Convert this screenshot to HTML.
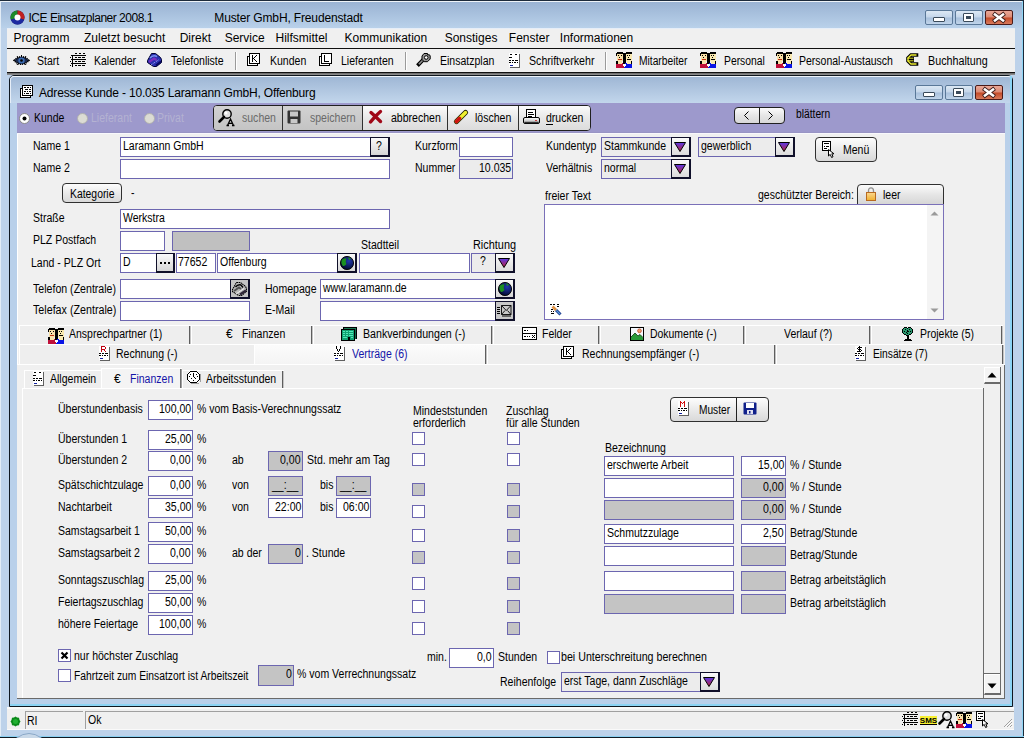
<!DOCTYPE html>
<html><head><meta charset="utf-8"><style>
html,body{margin:0;padding:0;}
body{width:1024px;height:738px;overflow:hidden;position:relative;background:#bdd2ea;font-family:"Liberation Sans",sans-serif;}
.a{position:absolute;box-sizing:border-box;}
.t{position:absolute;white-space:nowrap;color:#000;font-family:"Liberation Sans",sans-serif;font-size:12px;line-height:12px;transform-origin:0 0;}
svg.a{overflow:visible;}
</style></head><body>
<div class="a" style="left:0px;top:0px;width:1024px;height:738px;background:#bdd2ea;"></div>
<div class="a" style="left:0px;top:0px;width:1024px;height:1px;background:#1c2a3a;"></div>
<div class="a" style="left:0px;top:1px;width:1px;height:737px;background:#e2ecf6;"></div>
<div class="a" style="left:1023px;top:0px;width:1px;height:738px;background:#1c2a3a;"></div>
<div class="a" style="left:1022px;top:1px;width:1px;height:736px;background:#8fd6f5;"></div>
<div class="a" style="left:0px;top:737px;width:1024px;height:1px;background:#0f1a24;"></div>
<div class="a" style="left:0px;top:736px;width:1024px;height:1px;background:#89cff0;"></div>
<div class="a" style="left:1px;top:1px;width:1021px;height:27px;background:linear-gradient(#9ab3d3,#b9d1ea);border-top:1px solid #eef3f8;"></div>
<div class="a" style="left:7px;top:28px;width:1008px;height:1px;background:#e6eef8;"></div>
<svg class="a" style="left:10px;top:10px;" width="15" height="15" viewBox="0 0 15 15"><circle cx="7.5" cy="7.5" r="7" fill="#1a1a50"/><path d="M7.5 0.5 A7 7 0 0 0 0.9 9.8 L7.5 7.5Z" fill="#1d8a2a"/><path d="M7.5 0.5 A7 7 0 0 1 14.1 9.8 L7.5 7.5Z" fill="#c02020"/><path d="M0.9 9.8 A7 7 0 0 0 14.1 9.8 L7.5 7.5Z" fill="#1d2aa0"/><circle cx="7.5" cy="7.5" r="3" fill="#fff"/></svg>
<div class="t" style="top:12px;left:28.50px;letter-spacing:-0.487px;">ICE Einsatzplaner 2008.1</div>
<div class="t" style="top:12px;left:214.30px;letter-spacing:-0.142px;">Muster GmbH, Freudenstadt</div>
<div class="a" style="left:925px;top:10px;width:28px;height:15px;background:linear-gradient(#dce8f4,#c4d6ea 48%,#a8c0dc 52%,#c0d4ea);border:1px solid #5a7898;border-radius:2px;"></div>
<div class="a" style="left:955px;top:10px;width:28px;height:15px;background:linear-gradient(#dce8f4,#c4d6ea 48%,#a8c0dc 52%,#c0d4ea);border:1px solid #5a7898;border-radius:2px;"></div>
<div class="a" style="left:985px;top:10px;width:28px;height:15px;background:linear-gradient(#eaa898,#dc8a74 48%,#c44a28 52%,#d87a5c);border:1px solid #4a1a18;border-radius:2px;"></div>
<div class="a" style="left:933px;top:17px;width:12px;height:5px;background:#fff;border:1px solid #3a4a5a;border-radius:1px;"></div>
<div class="a" style="left:963px;top:13px;width:11px;height:9px;background:#fff;border:1px solid #3a4a5a;border-radius:1px;"></div>
<div class="a" style="left:966px;top:16px;width:5px;height:3px;background:#3a4a5a;"></div>
<svg class="a" style="left:993px;top:13px;" width="12" height="9" viewBox="0 0 12 9"><path d="M2 1.5 L10 7.5 M10 1.5 L2 7.5" stroke="#3a1a18" stroke-width="4.2" stroke-linecap="square"/><path d="M2 1.5 L10 7.5 M10 1.5 L2 7.5" stroke="#fff" stroke-width="2.6" stroke-linecap="square"/></svg>
<div class="a" style="left:7px;top:29px;width:1008px;height:19px;background:#f0f0f0;"></div>
<div class="a" style="left:7px;top:48px;width:1008px;height:1px;background:#101010;"></div>
<div class="t" style="top:32px;left:13.50px;">Programm</div>
<div class="t" style="top:32px;left:84.00px;">Zuletzt besucht</div>
<div class="t" style="top:32px;left:179.70px;">Direkt</div>
<div class="t" style="top:32px;left:224.70px;">Service</div>
<div class="t" style="top:32px;left:275.50px;">Hilfsmittel</div>
<div class="t" style="top:32px;left:344.50px;">Kommunikation</div>
<div class="t" style="top:32px;left:444.70px;">Sonstiges</div>
<div class="t" style="top:32px;left:508.80px;">Fenster</div>
<div class="t" style="top:32px;left:559.80px;">Informationen</div>
<div class="a" style="left:7px;top:49px;width:1008px;height:23px;background:#f0f0f0;"></div>
<div class="a" style="left:7px;top:72px;width:1008px;height:1px;background:#101010;"></div>
<div class="a" style="left:7px;top:73px;width:1008px;height:1px;background:#707070;"></div>
<div class="a" style="left:7px;top:74px;width:1008px;height:1px;background:#8a8a8a;"></div>
<div class="a" style="left:235px;top:52px;width:1px;height:18px;background:#9a9a9a;"></div>
<div class="a" style="left:236px;top:52px;width:1px;height:18px;background:#ffffff;"></div>
<div class="a" style="left:405px;top:52px;width:1px;height:18px;background:#9a9a9a;"></div>
<div class="a" style="left:406px;top:52px;width:1px;height:18px;background:#ffffff;"></div>
<div class="a" style="left:605px;top:52px;width:1px;height:18px;background:#9a9a9a;"></div>
<div class="a" style="left:606px;top:52px;width:1px;height:18px;background:#ffffff;"></div>
<div class="t" style="top:55px;left:36.50px;transform:scaleX(0.8770);">Start</div>
<div class="t" style="top:55px;left:93.50px;transform:scaleX(0.8770);">Kalender</div>
<div class="t" style="top:55px;left:171.00px;transform:scaleX(0.8770);">Telefonliste</div>
<div class="t" style="top:55px;left:269.50px;transform:scaleX(0.8770);">Kunden</div>
<div class="t" style="top:55px;left:341.40px;transform:scaleX(0.8770);">Lieferanten</div>
<div class="t" style="top:55px;left:439.50px;transform:scaleX(0.8770);">Einsatzplan</div>
<div class="t" style="top:55px;left:528.60px;transform:scaleX(0.8838);">Schriftverkehr</div>
<div class="t" style="top:55px;left:639.30px;transform:scaleX(0.8544);">Mitarbeiter</div>
<div class="t" style="top:55px;left:723.60px;transform:scaleX(0.8617);">Personal</div>
<div class="t" style="top:55px;left:799.40px;transform:scaleX(0.8748);">Personal-Austausch</div>
<div class="t" style="top:55px;left:928.40px;transform:scaleX(0.8955);">Buchhaltung</div>
<div class="a" style="left:9px;top:75px;width:1004px;height:632px;background:#b9d0ea;border:1px solid #101820;border-radius:5px 5px 0 0;"></div>
<div class="a" style="left:10px;top:76px;width:1002px;height:27px;background:linear-gradient(#9fb7d5,#c2d6ec);border-radius:4px 4px 0 0;border-top:1px solid #eef4fa;border-left:1px solid #e6eef8;"></div>
<div class="a" style="left:10px;top:704px;width:1002px;height:2px;background:#8cd4f4;"></div>
<div class="a" style="left:1010px;top:76px;width:2px;height:630px;background:#8cd4f4;"></div>
<svg class="a" style="left:20px;top:85px;" width="14" height="14" viewBox="0 0 14 14"><g shape-rendering="crispEdges"><rect x="0" y="3" width="11" height="10" fill="#000"/><rect x="1" y="4" width="9" height="8" fill="#fff"/><rect x="2" y="0" width="11" height="11" fill="#000"/><rect x="3" y="1" width="9" height="9" fill="#fff"/><rect x="4" y="2" width="2" height="1" fill="#000"/><rect x="7" y="2" width="2" height="1" fill="#000"/><rect x="10" y="2" width="1" height="1" fill="#000"/><rect x="5" y="4" width="3" height="1" fill="#000"/><rect x="9" y="4" width="2" height="1" fill="#000"/><rect x="4" y="6" width="2" height="1" fill="#000"/><rect x="7" y="6" width="1" height="1" fill="#000"/><rect x="9" y="6" width="2" height="1" fill="#000"/><rect x="4" y="8" width="1" height="1" fill="#000"/><rect x="6" y="8" width="3" height="1" fill="#000"/><rect x="10" y="8" width="1" height="1" fill="#000"/></g></svg>
<div class="t" style="top:87px;left:39.00px;letter-spacing:-0.174px;">Adresse Kunde - 10.035 Laramann GmbH, Offenburg</div>
<div class="a" style="left:915px;top:85px;width:28px;height:15px;background:linear-gradient(#dce8f4,#c4d6ea 48%,#a8c0dc 52%,#c0d4ea);border:1px solid #5a7898;border-radius:2px;"></div>
<div class="a" style="left:945px;top:85px;width:28px;height:15px;background:linear-gradient(#dce8f4,#c4d6ea 48%,#a8c0dc 52%,#c0d4ea);border:1px solid #5a7898;border-radius:2px;"></div>
<div class="a" style="left:975px;top:85px;width:28px;height:15px;background:linear-gradient(#eaa898,#dc8a74 48%,#c44a28 52%,#d87a5c);border:1px solid #4a1a18;border-radius:2px;"></div>
<div class="a" style="left:923px;top:92px;width:12px;height:5px;background:#fff;border:1px solid #3a4a5a;border-radius:1px;"></div>
<div class="a" style="left:953px;top:88px;width:11px;height:9px;background:#fff;border:1px solid #3a4a5a;border-radius:1px;"></div>
<div class="a" style="left:956px;top:91px;width:5px;height:3px;background:#3a4a5a;"></div>
<svg class="a" style="left:983px;top:88px;" width="12" height="9" viewBox="0 0 12 9"><path d="M2 1.5 L10 7.5 M10 1.5 L2 7.5" stroke="#3a1a18" stroke-width="4.2" stroke-linecap="square"/><path d="M2 1.5 L10 7.5 M10 1.5 L2 7.5" stroke="#fff" stroke-width="2.6" stroke-linecap="square"/></svg>
<div class="a" style="left:17px;top:103px;width:988px;height:30px;background:#9d99cc;"></div>
<div class="a" style="left:17px;top:132px;width:988px;height:1px;background:#9894c4;"></div>
<svg class="a" style="left:19px;top:113px;" width="11" height="11" viewBox="0 0 11 11"><circle cx="5.5" cy="5.5" r="5" fill="#ffffff" stroke="#8a8a8a" stroke-width="1"/><circle cx="5.5" cy="5.5" r="2" fill="#000"/></svg>
<svg class="a" style="left:77px;top:113px;" width="11" height="11" viewBox="0 0 11 11"><circle cx="5.5" cy="5.5" r="5" fill="#dcdcd4" stroke="#b0b0b0" stroke-width="1"/></svg>
<svg class="a" style="left:144px;top:113px;" width="11" height="11" viewBox="0 0 11 11"><circle cx="5.5" cy="5.5" r="5" fill="#dcdcd4" stroke="#b0b0b0" stroke-width="1"/></svg>
<div class="t" style="top:112px;left:33.60px;transform:scaleX(0.8770);">Kunde</div>
<div class="t" style="top:112px;left:90.60px;transform:scaleX(0.8770);color:#b4b2d2;">Lieferant</div>
<div class="t" style="top:112px;left:157.00px;transform:scaleX(0.8770);color:#b4b2d2;">Privat</div>
<div class="a" style="left:213px;top:105px;width:378px;height:26px;background:#ececec;border:1px solid #202020;border-radius:4px;"></div>
<div class="a" style="left:214px;top:106px;width:148px;height:24px;background:linear-gradient(#d2d2d2,#c4c4c4);border-radius:3px 0 0 3px;"></div>
<div class="a" style="left:363px;top:106px;width:227px;height:24px;background:linear-gradient(#fbfbfb,#e8e8e8 50%,#dcdcdc);border-radius:0 3px 3px 0;"></div>
<div class="a" style="left:282px;top:106px;width:1px;height:24px;background:#303030;"></div>
<div class="a" style="left:362px;top:106px;width:1px;height:24px;background:#303030;"></div>
<div class="a" style="left:447px;top:106px;width:1px;height:24px;background:#303030;"></div>
<div class="a" style="left:518px;top:106px;width:1px;height:24px;background:#303030;"></div>
<div class="t" style="top:112px;left:241.80px;transform:scaleX(0.8770);color:#6a6a6a;">suchen</div>
<div class="t" style="top:112px;left:310.00px;transform:scaleX(0.8770);color:#6a6a6a;">speichern</div>
<div class="t" style="top:112px;left:390.50px;transform:scaleX(0.8770);">abbrechen</div>
<div class="t" style="top:112px;left:475.30px;transform:scaleX(0.8770);">löschen</div>
<div class="t" style="top:112px;left:546.30px;transform:scaleX(0.8770);">drucken</div>
<div class="a" style="left:546px;top:124px;width:7px;height:1px;background:#000;"></div>
<svg class="a" style="left:218px;top:109px;" width="17" height="17" viewBox="0 0 17 17"><circle cx="9" cy="5" r="4.2" fill="#e0e0e0" stroke="#000" stroke-width="1.4"/><circle cx="8" cy="4" r="1.5" fill="#fff"/><path d="M6 8 L1.5 12.5" stroke="#000" stroke-width="2.6" stroke-linecap="round"/><path d="M9.5 16.5 L12.5 10 L15.5 16.5 M10.8 14.3 h3.4 M8.5 16.5h2.5M14 16.5h2.5" stroke="#000" stroke-width="1.3" fill="none"/></svg>
<svg class="a" style="left:287px;top:110px;" width="14" height="14" viewBox="0 0 14 14"><rect x="0.5" y="0.5" width="13" height="13" fill="#333" rx="1"/><rect x="3" y="1.5" width="8" height="5" fill="#c8c8c8"/><rect x="3.5" y="9" width="7" height="4" fill="#c8c8c8"/></svg>
<svg class="a" style="left:369px;top:110px;" width="14" height="14" viewBox="0 0 14 14"><path d="M2 2.5 Q6 6 11.5 11.5 M11.5 1.5 Q6 6 1.5 12" stroke="#a00818" stroke-width="3.4" stroke-linecap="round" fill="none"/></svg>
<svg class="a" style="left:454px;top:110px;" width="14" height="14" viewBox="0 0 14 14"><path d="M2.5 11.5 L11.5 2.5" stroke="#202000" stroke-width="5.2" stroke-linecap="round"/><path d="M2.5 11.5 L11.5 2.5" stroke="#f0f030" stroke-width="3.4" stroke-linecap="round"/><path d="M2.5 11.5 L5.5 8.5" stroke="#d01010" stroke-width="3.6" stroke-linecap="round"/></svg>
<svg class="a" style="left:523px;top:109px;" width="17" height="16" viewBox="0 0 17 16"><rect x="3.5" y="0.5" width="9" height="9" fill="#fff" stroke="#000"/><path d="M5 3.5h5M5 5.5h6M5 7.5h4" stroke="#000"/><defs><linearGradient id="prg" x1="0" y1="0" x2="0" y2="1"><stop offset="0" stop-color="#ffffff"/><stop offset="1" stop-color="#a8a8a8"/></linearGradient></defs><rect x="0.5" y="8.5" width="16" height="6" rx="1.5" fill="url(#prg)" stroke="#000"/><path d="M1.5 13.5 H15.5" stroke="#303030" stroke-width="1.4"/><rect x="12" y="11" width="2" height="1" fill="#c04040"/></svg>
<div class="a" style="left:734px;top:107px;width:51px;height:17px;background:linear-gradient(#fbfbfb,#e6e6e6 50%,#d8d8d8);border:1px solid #202020;border-radius:4px;"></div>
<div class="a" style="left:759px;top:108px;width:1px;height:15px;background:#202020;"></div>
<svg class="a" style="left:743px;top:110px;" width="8" height="11" viewBox="0 0 8 11"><path d="M5.5 1.5 L1.5 5.5 L5.5 9.5" stroke="#000" fill="none"/></svg>
<svg class="a" style="left:767px;top:110px;" width="8" height="11" viewBox="0 0 8 11"><path d="M1.5 1.5 L5.5 5.5 L1.5 9.5" stroke="#000" fill="none"/></svg>
<div class="t" style="top:108px;left:795.80px;transform:scaleX(0.8550);">blättern</div>
<div class="a" style="left:17px;top:133px;width:988px;height:565px;background:#f0f0f0;"></div>
<div class="a" style="left:17px;top:133px;width:1px;height:231px;background:#ffffff;"></div>
<div class="a" style="left:17px;top:133px;width:988px;height:1px;background:#f8f8fc;"></div>
<div class="t" style="top:140px;left:33.00px;transform:scaleX(0.8770);">Name 1</div>
<div class="t" style="top:162px;left:33.00px;transform:scaleX(0.8770);">Name 2</div>
<div class="a" style="left:120px;top:137px;width:270px;height:20px;background:#fff;border:1px solid #6c66b0;"></div>
<div class="t" style="top:140px;left:123.00px;transform:scaleX(0.8770);">Laramann GmbH</div>
<div class="a" style="left:370px;top:137px;width:20px;height:20px;background:linear-gradient(#fafafa,#d6d6d6);border:2px solid #10102a;border-left-width:1px;border-top-width:1px;"></div>
<div class="t" style="top:140px;left:376.00px;transform:scaleX(0.8770);">?</div>
<div class="a" style="left:120px;top:159px;width:270px;height:20px;background:#fff;border:1px solid #6c66b0;"></div>
<div class="t" style="top:140px;left:414.50px;transform:scaleX(0.8770);">Kurzform</div>
<div class="t" style="top:162px;left:414.50px;transform:scaleX(0.8770);">Nummer</div>
<div class="a" style="left:459px;top:137px;width:54px;height:20px;background:#fff;border:1px solid #6c66b0;"></div>
<div class="a" style="left:459px;top:159px;width:54px;height:20px;background:#ececec;border:1px solid #6c66b0;"></div>
<div class="t" style="top:162px;left:478.55px;transform:scaleX(0.8770);">10.035</div>
<div class="t" style="top:140px;left:546.30px;transform:scaleX(0.8770);">Kundentyp</div>
<div class="t" style="top:162px;left:546.30px;transform:scaleX(0.8770);">Verhältnis</div>
<div class="a" style="left:601px;top:137px;width:90px;height:20px;background:#ececec;border:1px solid #6c66b0;"></div>
<div class="t" style="top:140px;left:603.50px;transform:scaleX(0.8770);">Stammkunde</div>
<div class="a" style="left:671px;top:137px;width:20px;height:20px;background:linear-gradient(#fafafa,#dcdcdc);border:1px solid #10102a;border-right-width:2px;border-bottom-width:2px;"></div>
<svg class="a" style="left:674px;top:142px;" width="12" height="10" viewBox="0 0 12 10"><defs><linearGradient id="g" x1="0" y1="0" x2="0" y2="1"><stop offset="0" stop-color="#5a3ae8"/><stop offset="1" stop-color="#c0203a"/></linearGradient></defs><path d="M0.5 0.5 H11.5 L6 9.5 Z" fill="url(#g)" stroke="#000" stroke-width="1"/></svg>
<div class="a" style="left:698px;top:137px;width:97px;height:20px;background:#ececec;border:1px solid #6c66b0;"></div>
<div class="t" style="top:140px;left:700.50px;transform:scaleX(0.8770);">gewerblich</div>
<div class="a" style="left:775px;top:137px;width:20px;height:20px;background:linear-gradient(#fafafa,#dcdcdc);border:1px solid #10102a;border-right-width:2px;border-bottom-width:2px;"></div>
<svg class="a" style="left:778px;top:142px;" width="12" height="10" viewBox="0 0 12 10"><defs><linearGradient id="g" x1="0" y1="0" x2="0" y2="1"><stop offset="0" stop-color="#5a3ae8"/><stop offset="1" stop-color="#c0203a"/></linearGradient></defs><path d="M0.5 0.5 H11.5 L6 9.5 Z" fill="url(#g)" stroke="#000" stroke-width="1"/></svg>
<div class="a" style="left:601px;top:159px;width:90px;height:20px;background:#ececec;border:1px solid #6c66b0;"></div>
<div class="t" style="top:162px;left:603.50px;transform:scaleX(0.8770);">normal</div>
<div class="a" style="left:671px;top:159px;width:20px;height:20px;background:linear-gradient(#fafafa,#dcdcdc);border:1px solid #10102a;border-right-width:2px;border-bottom-width:2px;"></div>
<svg class="a" style="left:674px;top:164px;" width="12" height="10" viewBox="0 0 12 10"><defs><linearGradient id="g" x1="0" y1="0" x2="0" y2="1"><stop offset="0" stop-color="#5a3ae8"/><stop offset="1" stop-color="#c0203a"/></linearGradient></defs><path d="M0.5 0.5 H11.5 L6 9.5 Z" fill="url(#g)" stroke="#000" stroke-width="1"/></svg>
<div class="a" style="left:815px;top:137px;width:62px;height:25px;background:linear-gradient(#fdfdfd,#eaeaea 50%,#d9d9d9);border:1px solid #303030;border-radius:4px;"></div>
<div class="t" style="top:144px;left:843.40px;transform:scaleX(0.8770);">Menü</div>
<svg class="a" style="left:822px;top:141px;" width="13" height="17" viewBox="0 0 13 17"><g shape-rendering="crispEdges"><rect x="0" y="0" width="9" height="10" fill="#000"/><rect x="1" y="1" width="7" height="8" fill="#fff"/><rect x="2" y="2" width="5" height="1" fill="#000"/><rect x="2" y="5" width="1" height="1" fill="#000"/><rect x="4" y="5" width="3" height="1" fill="#000"/><rect x="2" y="7" width="3" height="1" fill="#000"/></g><path d="M6.5 8.5 V15 L8.2 13.4 L9.6 16.5 L11 15.8 L9.8 12.8 H12 Z" fill="#fff" stroke="#000" stroke-width="1"/></svg>
<div class="a" style="left:62px;top:183px;width:60px;height:20px;background:linear-gradient(#fdfdfd,#eaeaea 50%,#d9d9d9);border:1px solid #303030;border-radius:4px;"></div>
<div class="t" style="top:188px;left:70.30px;transform:scaleX(0.8654);">Kategorie</div>
<div class="t" style="top:187px;left:131.00px;transform:scaleX(0.8770);">-</div>
<div class="t" style="top:212px;left:32.50px;transform:scaleX(0.8770);">Straße</div>
<div class="a" style="left:120px;top:209px;width:270px;height:20px;background:#fff;border:1px solid #6c66b0;"></div>
<div class="t" style="top:212px;left:123.00px;transform:scaleX(0.8770);">Werkstra</div>
<div class="t" style="top:234px;left:32.50px;transform:scaleX(0.8770);">PLZ Postfach</div>
<div class="a" style="left:120px;top:231px;width:45px;height:20px;background:#fff;border:1px solid #6c66b0;"></div>
<div class="a" style="left:172px;top:231px;width:78px;height:20px;background:#c0c0c0;border:1px solid #6c66b0;"></div>
<div class="t" style="top:257px;left:30.60px;transform:scaleX(0.8770);">Land - PLZ Ort</div>
<div class="a" style="left:120px;top:253px;width:55px;height:20px;background:#fff;border:1px solid #6c66b0;"></div>
<div class="t" style="top:256px;left:123.00px;transform:scaleX(0.8770);">D</div>
<div class="a" style="left:156px;top:253px;width:19px;height:20px;background:linear-gradient(#fafafa,#d6d6d6);border:2px solid #10102a;border-left-width:1px;border-top-width:1px;"></div>
<svg class="a" style="left:159px;top:262px;" width="12" height="3" viewBox="0 0 12 3"><rect x="1" y="0" width="2" height="2" fill="#000"/><rect x="5" y="0" width="2" height="2" fill="#000"/><rect x="9" y="0" width="2" height="2" fill="#000"/></svg>
<div class="a" style="left:176px;top:253px;width:40px;height:20px;background:#fff;border:1px solid #6c66b0;"></div>
<div class="t" style="top:256px;left:178.00px;transform:scaleX(0.8770);">77652</div>
<div class="a" style="left:217px;top:253px;width:140px;height:20px;background:#fff;border:1px solid #6c66b0;"></div>
<div class="t" style="top:256px;left:219.50px;transform:scaleX(0.8770);">Offenburg</div>
<div class="a" style="left:337px;top:253px;width:20px;height:20px;background:linear-gradient(#fafafa,#d6d6d6);border:2px solid #10102a;border-left-width:1px;border-top-width:1px;"></div>
<svg class="a" style="left:340px;top:256px;" width="14" height="14" viewBox="0 0 14 14"><defs><radialGradient id="gb" cx="0.65" cy="0.35" r="0.7"><stop offset="0" stop-color="#2038b0"/><stop offset="1" stop-color="#000828"/></radialGradient></defs><circle cx="7" cy="7" r="6.6" fill="url(#gb)"/><path d="M1.5 4 Q4 1.5 6.5 2.5 Q5 6 6.5 8 Q4 11 2.5 9.5 Q0.8 7 1.5 4Z M8 1.2 Q10 1.5 11 3 L9 4Z" fill="#1a9020"/><circle cx="7" cy="7" r="6.6" fill="none" stroke="#000" stroke-width="0.9"/></svg>
<div class="t" style="top:239px;left:360.50px;transform:scaleX(0.8770);">Stadtteil</div>
<div class="a" style="left:359px;top:253px;width:111px;height:20px;background:#fff;border:1px solid #6c66b0;"></div>
<div class="t" style="top:239px;left:472.50px;transform:scaleX(0.9085);">Richtung</div>
<div class="a" style="left:471px;top:253px;width:44px;height:20px;background:#ececec;border:1px solid #6c66b0;"></div>
<div class="t" style="top:255px;left:480.00px;transform:scaleX(0.8770);">?</div>
<div class="a" style="left:495px;top:253px;width:20px;height:20px;background:linear-gradient(#fafafa,#dcdcdc);border:1px solid #10102a;border-right-width:2px;border-bottom-width:2px;"></div>
<svg class="a" style="left:498px;top:258px;" width="12" height="10" viewBox="0 0 12 10"><defs><linearGradient id="g" x1="0" y1="0" x2="0" y2="1"><stop offset="0" stop-color="#5a3ae8"/><stop offset="1" stop-color="#c0203a"/></linearGradient></defs><path d="M0.5 0.5 H11.5 L6 9.5 Z" fill="url(#g)" stroke="#000" stroke-width="1"/></svg>
<div class="t" style="top:283px;left:33.10px;transform:scaleX(0.8830);">Telefon (Zentrale)</div>
<div class="a" style="left:120px;top:279px;width:130px;height:20px;background:#fff;border:1px solid #6c66b0;"></div>
<div class="a" style="left:230px;top:279px;width:20px;height:20px;background:#c4c4c4;border:2px solid #10102a;border-left-width:1px;border-top-width:1px;"></div>
<svg class="a" style="left:232px;top:282px;" width="15" height="14" viewBox="0 0 15 14"><path d="M4.5 0.5 H8.5 L13.5 4.5 L14.5 6.5 V9.5 L9.5 13.5 H6.5 L0.5 9.5 V7.5 L2.5 4 Z" fill="#b8b8b8" stroke="#000" stroke-width="1.1" stroke-dasharray="1.5 0.6"/><path d="M3.5 5 Q6 2 9 3 L11 5.5" stroke="#000" stroke-width="1.4" fill="none"/><path d="M2 9 L7 5.5 L9 7" stroke="#505050" stroke-width="2" fill="none"/><path d="M4 12 L12 6.5" stroke="#f0f0f0" stroke-width="1"/><path d="M8 12.5 L14 8.5" stroke="#302838" stroke-width="2.4"/></svg>
<div class="t" style="top:304px;left:33.10px;transform:scaleX(0.8925);">Telefax (Zentrale)</div>
<div class="a" style="left:120px;top:301px;width:130px;height:20px;background:#fff;border:1px solid #6c66b0;"></div>
<div class="t" style="top:283px;left:264.70px;transform:scaleX(0.8770);">Homepage</div>
<div class="a" style="left:320px;top:279px;width:195px;height:20px;background:#fff;border:1px solid #6c66b0;"></div>
<div class="t" style="top:282px;left:323.38px;transform:scaleX(0.8770);">www.laramann.de</div>
<div class="a" style="left:495px;top:279px;width:20px;height:20px;background:linear-gradient(#fafafa,#d6d6d6);border:2px solid #10102a;border-left-width:1px;border-top-width:1px;"></div>
<svg class="a" style="left:498px;top:282px;" width="14" height="14" viewBox="0 0 14 14"><defs><radialGradient id="gb" cx="0.65" cy="0.35" r="0.7"><stop offset="0" stop-color="#2038b0"/><stop offset="1" stop-color="#000828"/></radialGradient></defs><circle cx="7" cy="7" r="6.6" fill="url(#gb)"/><path d="M1.5 4 Q4 1.5 6.5 2.5 Q5 6 6.5 8 Q4 11 2.5 9.5 Q0.8 7 1.5 4Z M8 1.2 Q10 1.5 11 3 L9 4Z" fill="#1a9020"/><circle cx="7" cy="7" r="6.6" fill="none" stroke="#000" stroke-width="0.9"/></svg>
<div class="t" style="top:304px;left:264.70px;transform:scaleX(0.8770);">E-Mail</div>
<div class="a" style="left:320px;top:301px;width:195px;height:20px;background:#fff;border:1px solid #6c66b0;"></div>
<div class="a" style="left:495px;top:301px;width:20px;height:20px;background:#c8c8c8;border:2px solid #10102a;border-left-width:1px;border-top-width:1px;"></div>
<svg class="a" style="left:497px;top:305px;" width="15" height="12" viewBox="0 0 15 12"><path d="M4.5 0.5 H14 V9.5 H4.5Z" fill="none" stroke="#000" stroke-width="0.9"/><path d="M4.5 0.5 L9.25 5.5 L14 0.5 M4.5 9.5 L8 5.5 M14 9.5 L10.5 5.5" fill="none" stroke="#000" stroke-width="0.9"/><path d="M0 2.5h3M0 4.5h3M0 6.5h3M0 8.5h3M5 11h9" stroke="#000" stroke-width="1"/></svg>
<div class="t" style="top:190px;left:544.60px;transform:scaleX(0.8755);">freier Text</div>
<div class="t" style="top:189px;left:757.80px;transform:scaleX(0.8761);">geschützter Bereich:</div>
<div class="a" style="left:857px;top:184px;width:87px;height:21px;background:linear-gradient(#fbfbfb,#e6e6e6 50%,#d6d6d6);border:1px solid #303030;border-radius:4px 4px 0 0;"></div>
<svg class="a" style="left:865px;top:187px;" width="12" height="14" viewBox="0 0 12 14"><path d="M3.5 6 V3.8 Q3.5 0.8 6 0.8 Q8.5 0.8 8.5 3.8 V6" fill="none" stroke="#909090" stroke-width="1.3"/><defs><linearGradient id="lkg" x1="0" y1="0" x2="0" y2="1"><stop offset="0" stop-color="#fbd890"/><stop offset="1" stop-color="#f0b030"/></linearGradient></defs><rect x="1.5" y="5.5" width="9" height="8" fill="url(#lkg)" stroke="#b86a20" stroke-width="1"/></svg>
<div class="t" style="top:189px;left:882.60px;transform:scaleX(0.8770);">leer</div>
<div class="a" style="left:544px;top:204px;width:400px;height:116px;background:#fff;border:1px solid #7a70b8;"></div>
<div class="a" style="left:927px;top:205px;width:16px;height:114px;background:#f4f4f4;"></div>
<svg class="a" style="left:930px;top:211px;" width="9" height="5" viewBox="0 0 9 5"><path d="M0.5 4.5 L4.5 0.5 L8.5 4.5Z" fill="#9a9a9a"/></svg>
<svg class="a" style="left:930px;top:308px;" width="9" height="5" viewBox="0 0 9 5"><path d="M0.5 0.5 L4.5 4.5 L8.5 0.5Z" fill="#9a9a9a"/></svg>
<svg class="a" style="left:550px;top:304px;" width="12" height="12" viewBox="0 0 12 12"><g shape-rendering="crispEdges"><rect x="0" y="0" width="2" height="1" fill="#000"/><rect x="3" y="0" width="2" height="1" fill="#000"/><rect x="7" y="0" width="2" height="1" fill="#000"/><rect x="7" y="2" width="2" height="1" fill="#000"/><rect x="1" y="5" width="2" height="1" fill="#000"/><rect x="1" y="7" width="1" height="1" fill="#000"/><rect x="3" y="7" width="1" height="1" fill="#000"/><rect x="1" y="9" width="3" height="1" fill="#000"/></g><path d="M6 6 L10.5 10.5" stroke="#1a3a8a" stroke-width="3"/><path d="M6.3 6.3 L10 10" stroke="#5a9ae0" stroke-width="1.2"/><path d="M2.5 2.5 L6 6" stroke="#e09040" stroke-width="2.6"/></svg>
<div class="a" style="left:19px;top:325px;width:172px;height:19px;background:#eeeeee;"></div>
<div class="a" style="left:19px;top:325px;width:172px;height:1px;background:#ffffff;"></div>
<div class="a" style="left:19px;top:325px;width:1px;height:19px;background:#ffffff;"></div>
<div class="a" style="left:189px;top:326px;width:1px;height:18px;background:#5e5e5e;"></div>
<div class="a" style="left:190px;top:326px;width:1px;height:18px;background:#c4c4c4;"></div>
<div class="a" style="left:191px;top:325px;width:122px;height:19px;background:#eeeeee;"></div>
<div class="a" style="left:191px;top:325px;width:122px;height:1px;background:#ffffff;"></div>
<div class="a" style="left:191px;top:325px;width:1px;height:19px;background:#ffffff;"></div>
<div class="a" style="left:311px;top:326px;width:1px;height:18px;background:#5e5e5e;"></div>
<div class="a" style="left:312px;top:326px;width:1px;height:18px;background:#c4c4c4;"></div>
<div class="a" style="left:313px;top:325px;width:180px;height:19px;background:#eeeeee;"></div>
<div class="a" style="left:313px;top:325px;width:180px;height:1px;background:#ffffff;"></div>
<div class="a" style="left:313px;top:325px;width:1px;height:19px;background:#ffffff;"></div>
<div class="a" style="left:491px;top:326px;width:1px;height:18px;background:#5e5e5e;"></div>
<div class="a" style="left:492px;top:326px;width:1px;height:18px;background:#c4c4c4;"></div>
<div class="a" style="left:493px;top:325px;width:107px;height:19px;background:#eeeeee;"></div>
<div class="a" style="left:493px;top:325px;width:107px;height:1px;background:#ffffff;"></div>
<div class="a" style="left:493px;top:325px;width:1px;height:19px;background:#ffffff;"></div>
<div class="a" style="left:598px;top:326px;width:1px;height:18px;background:#5e5e5e;"></div>
<div class="a" style="left:599px;top:326px;width:1px;height:18px;background:#c4c4c4;"></div>
<div class="a" style="left:600px;top:325px;width:145px;height:19px;background:#eeeeee;"></div>
<div class="a" style="left:600px;top:325px;width:145px;height:1px;background:#ffffff;"></div>
<div class="a" style="left:600px;top:325px;width:1px;height:19px;background:#ffffff;"></div>
<div class="a" style="left:743px;top:326px;width:1px;height:18px;background:#5e5e5e;"></div>
<div class="a" style="left:744px;top:326px;width:1px;height:18px;background:#c4c4c4;"></div>
<div class="a" style="left:745px;top:325px;width:126px;height:19px;background:#eeeeee;"></div>
<div class="a" style="left:745px;top:325px;width:126px;height:1px;background:#ffffff;"></div>
<div class="a" style="left:745px;top:325px;width:1px;height:19px;background:#ffffff;"></div>
<div class="a" style="left:869px;top:326px;width:1px;height:18px;background:#5e5e5e;"></div>
<div class="a" style="left:870px;top:326px;width:1px;height:18px;background:#c4c4c4;"></div>
<div class="a" style="left:871px;top:325px;width:132px;height:19px;background:#eeeeee;"></div>
<div class="a" style="left:871px;top:325px;width:132px;height:1px;background:#ffffff;"></div>
<div class="a" style="left:871px;top:325px;width:1px;height:19px;background:#ffffff;"></div>
<div class="a" style="left:1001px;top:326px;width:1px;height:18px;background:#5e5e5e;"></div>
<div class="a" style="left:1002px;top:326px;width:1px;height:18px;background:#c4c4c4;"></div>
<div class="a" style="left:19px;top:344px;width:985px;height:20px;background:#eeeeee;"></div>
<div class="a" style="left:19px;top:344px;width:235px;height:20px;background:#eeeeee;"></div>
<div class="a" style="left:19px;top:344px;width:235px;height:1px;background:#ffffff;"></div>
<div class="a" style="left:19px;top:344px;width:1px;height:20px;background:#ffffff;"></div>
<div class="a" style="left:254px;top:344px;width:233px;height:20px;background:linear-gradient(#fcfcfc,#f4f4f4);"></div>
<div class="a" style="left:254px;top:344px;width:233px;height:1px;background:#ffffff;"></div>
<div class="a" style="left:254px;top:344px;width:1px;height:20px;background:#ffffff;"></div>
<div class="a" style="left:485px;top:345px;width:1px;height:19px;background:#5e5e5e;"></div>
<div class="a" style="left:486px;top:345px;width:1px;height:19px;background:#c4c4c4;"></div>
<div class="a" style="left:487px;top:344px;width:289px;height:20px;background:#eeeeee;"></div>
<div class="a" style="left:487px;top:344px;width:289px;height:1px;background:#ffffff;"></div>
<div class="a" style="left:487px;top:344px;width:1px;height:20px;background:#ffffff;"></div>
<div class="a" style="left:774px;top:345px;width:1px;height:19px;background:#5e5e5e;"></div>
<div class="a" style="left:775px;top:345px;width:1px;height:19px;background:#c4c4c4;"></div>
<div class="a" style="left:776px;top:344px;width:228px;height:20px;background:#eeeeee;"></div>
<div class="a" style="left:776px;top:344px;width:228px;height:1px;background:#ffffff;"></div>
<div class="a" style="left:776px;top:344px;width:1px;height:20px;background:#ffffff;"></div>
<div class="a" style="left:1002px;top:345px;width:1px;height:19px;background:#5e5e5e;"></div>
<div class="a" style="left:1003px;top:345px;width:1px;height:19px;background:#c4c4c4;"></div>
<div class="a" style="left:17px;top:364px;width:988px;height:1px;background:#ffffff;"></div>
<svg class="a" style="left:48px;top:328px;" width="16" height="16" viewBox="0 0 16 16"><g shape-rendering="crispEdges"><rect x="0" y="11" width="8" height="5" fill="#c0103a"/><rect x="8" y="11" width="8" height="5" fill="#0a14e6"/><rect x="1" y="0" width="6" height="2" fill="#000"/><rect x="0" y="1" width="1" height="3" fill="#000"/><rect x="7" y="1" width="2" height="11" fill="#000"/><rect x="1" y="2" width="6" height="7" fill="#f8e0a8"/><rect x="2" y="9" width="4" height="3" fill="#f8e0a8"/><rect x="0" y="9" width="2" height="3" fill="#000"/><rect x="10" y="0" width="6" height="2" fill="#000"/><rect x="9" y="1" width="1" height="10" fill="#000"/><rect x="10" y="2" width="6" height="7" fill="#f8e8b0"/><rect x="11" y="9" width="4" height="3" fill="#f8e8b0"/><rect x="15" y="9" width="1" height="3" fill="#000"/><rect x="2" y="3" width="1" height="1" fill="#000"/><rect x="5" y="3" width="1" height="1" fill="#000"/><rect x="3" y="5" width="1" height="1" fill="#000"/><rect x="2" y="7" width="4" height="1" fill="#c03010"/><rect x="11" y="3" width="1" height="1" fill="#000"/><rect x="13" y="3" width="1" height="1" fill="#000"/><rect x="12" y="5" width="1" height="1" fill="#000"/><rect x="11" y="7" width="4" height="1" fill="#000"/><rect x="7" y="12" width="3" height="2" fill="#fff"/><rect x="8" y="14" width="1" height="1" fill="#fff"/></g></svg>
<div class="t" style="top:328px;left:69.00px;transform:scaleX(0.8738);">Ansprechpartner (1)</div>
<div class="t" style="top:328px;left:226.00px;">€</div>
<div class="t" style="top:328px;left:241.50px;transform:scaleX(0.8770);">Finanzen</div>
<svg class="a" style="left:341px;top:327px;" width="16" height="14" viewBox="0 0 16 14"><g shape-rendering="crispEdges"><rect x="2" y="0" width="14" height="12" fill="#000"/><rect x="0" y="2" width="14" height="12" fill="#000"/><rect x="3" y="1" width="12" height="1" fill="#1a7a52"/><rect x="14" y="2" width="1" height="10" fill="#0a6a4a"/><rect x="1" y="3" width="12" height="10" fill="#12a070"/><rect x="2" y="4" width="2" height="1" fill="#50e8b8"/><rect x="5" y="4" width="2" height="1" fill="#50e8b8"/><rect x="8" y="4" width="2" height="1" fill="#50e8b8"/><rect x="10" y="4" width="2" height="1" fill="#50e8b8"/><rect x="2" y="6" width="2" height="1" fill="#50e8b8"/><rect x="5" y="6" width="2" height="1" fill="#50e8b8"/><rect x="8" y="6" width="2" height="1" fill="#50e8b8"/><rect x="10" y="6" width="2" height="1" fill="#50e8b8"/><rect x="2" y="8" width="2" height="1" fill="#50e8b8"/><rect x="5" y="8" width="2" height="1" fill="#50e8b8"/><rect x="8" y="8" width="2" height="1" fill="#50e8b8"/><rect x="10" y="8" width="2" height="1" fill="#50e8b8"/><rect x="2" y="10" width="4" height="1" fill="#50e8b8"/><rect x="10" y="10" width="2" height="1" fill="#50e8b8"/><rect x="7" y="10" width="2" height="3" fill="#000"/></g></svg>
<div class="t" style="top:328px;left:362.70px;transform:scaleX(0.8870);">Bankverbindungen (-)</div>
<svg class="a" style="left:522px;top:327px;" width="15" height="13" viewBox="0 0 15 13"><g shape-rendering="crispEdges"><rect x="0" y="0" width="15" height="13" fill="#000"/><rect x="1" y="1" width="13" height="11" fill="#fff"/><rect x="1" y="6" width="13" height="1" fill="#000"/><rect x="2" y="3" width="2" height="1" fill="#000"/><rect x="5" y="3" width="1" height="1" fill="#000"/><rect x="2" y="9" width="2" height="1" fill="#000"/><rect x="5" y="9" width="1" height="1" fill="#000"/><rect x="7" y="9" width="1" height="1" fill="#000"/><rect x="10" y="8" width="1" height="1" fill="#000"/><rect x="12" y="8" width="1" height="1" fill="#000"/><rect x="11" y="9" width="1" height="1" fill="#000"/><rect x="10" y="10" width="1" height="1" fill="#000"/><rect x="12" y="10" width="1" height="1" fill="#000"/></g></svg>
<div class="t" style="top:328px;left:542.30px;transform:scaleX(0.8770);">Felder</div>
<svg class="a" style="left:630px;top:327px;" width="14" height="14" viewBox="0 0 14 14"><rect x="0.5" y="0.5" width="13" height="13" fill="#f4f8fc" stroke="#000"/><path d="M1 13 V10 L5 6 L8 9 L10 7.5 L13 10.5 V13Z" fill="#2a9a3a"/><path d="M1 10 L5 6 L8 9 L10 7.5 L13 10.5" stroke="#103a10" fill="none" stroke-width="0.8"/><circle cx="9.5" cy="3.8" r="1.9" fill="#f0a070" stroke="#c04020" stroke-width="0.7"/></svg>
<div class="t" style="top:328px;left:649.50px;transform:scaleX(0.8701);">Dokumente (-)</div>
<div class="t" style="top:328px;left:784.40px;transform:scaleX(0.8727);">Verlauf (?)</div>
<svg class="a" style="left:902px;top:327px;" width="11" height="14" viewBox="0 0 11 14"><g shape-rendering="crispEdges"><rect x="2" y="0" width="1" height="1" fill="#000"/><rect x="3" y="0" width="1" height="1" fill="#000"/><rect x="4" y="0" width="1" height="1" fill="#000"/><rect x="6" y="0" width="1" height="1" fill="#000"/><rect x="7" y="0" width="1" height="1" fill="#000"/><rect x="8" y="0" width="1" height="1" fill="#000"/><rect x="1" y="1" width="1" height="1" fill="#000"/><rect x="2" y="1" width="1" height="1" fill="#2a9a70"/><rect x="3" y="1" width="1" height="1" fill="#2a9a70"/><rect x="4" y="1" width="1" height="1" fill="#2a9a70"/><rect x="5" y="1" width="1" height="1" fill="#000"/><rect x="6" y="1" width="1" height="1" fill="#2a9a70"/><rect x="7" y="1" width="1" height="1" fill="#2a9a70"/><rect x="8" y="1" width="1" height="1" fill="#2a9a70"/><rect x="9" y="1" width="1" height="1" fill="#000"/><rect x="0" y="2" width="1" height="1" fill="#000"/><rect x="1" y="2" width="1" height="1" fill="#2a9a70"/><rect x="2" y="2" width="1" height="1" fill="#2a9a70"/><rect x="3" y="2" width="1" height="1" fill="#000"/><rect x="4" y="2" width="1" height="1" fill="#2a9a70"/><rect x="5" y="2" width="1" height="1" fill="#2a9a70"/><rect x="6" y="2" width="1" height="1" fill="#2a9a70"/><rect x="7" y="2" width="1" height="1" fill="#000"/><rect x="8" y="2" width="1" height="1" fill="#2a9a70"/><rect x="9" y="2" width="1" height="1" fill="#2a9a70"/><rect x="10" y="2" width="1" height="1" fill="#000"/><rect x="0" y="3" width="1" height="1" fill="#000"/><rect x="1" y="3" width="1" height="1" fill="#2a9a70"/><rect x="2" y="3" width="1" height="1" fill="#2a9a70"/><rect x="3" y="3" width="1" height="1" fill="#2a9a70"/><rect x="4" y="3" width="1" height="1" fill="#2a9a70"/><rect x="5" y="3" width="1" height="1" fill="#000"/><rect x="6" y="3" width="1" height="1" fill="#2a9a70"/><rect x="7" y="3" width="1" height="1" fill="#2a9a70"/><rect x="8" y="3" width="1" height="1" fill="#2a9a70"/><rect x="9" y="3" width="1" height="1" fill="#2a9a70"/><rect x="10" y="3" width="1" height="1" fill="#000"/><rect x="0" y="4" width="1" height="1" fill="#000"/><rect x="1" y="4" width="1" height="1" fill="#2a9a70"/><rect x="2" y="4" width="1" height="1" fill="#000"/><rect x="3" y="4" width="1" height="1" fill="#2a9a70"/><rect x="4" y="4" width="1" height="1" fill="#2a9a70"/><rect x="5" y="4" width="1" height="1" fill="#000"/><rect x="6" y="4" width="1" height="1" fill="#000"/><rect x="7" y="4" width="1" height="1" fill="#2a9a70"/><rect x="8" y="4" width="1" height="1" fill="#000"/><rect x="9" y="4" width="1" height="1" fill="#2a9a70"/><rect x="10" y="4" width="1" height="1" fill="#000"/><rect x="0" y="5" width="1" height="1" fill="#000"/><rect x="1" y="5" width="1" height="1" fill="#2a9a70"/><rect x="2" y="5" width="1" height="1" fill="#2a9a70"/><rect x="3" y="5" width="1" height="1" fill="#2a9a70"/><rect x="4" y="5" width="1" height="1" fill="#000"/><rect x="5" y="5" width="1" height="1" fill="#2a9a70"/><rect x="6" y="5" width="1" height="1" fill="#2a9a70"/><rect x="7" y="5" width="1" height="1" fill="#2a9a70"/><rect x="8" y="5" width="1" height="1" fill="#2a9a70"/><rect x="9" y="5" width="1" height="1" fill="#2a9a70"/><rect x="10" y="5" width="1" height="1" fill="#000"/><rect x="1" y="6" width="1" height="1" fill="#000"/><rect x="2" y="6" width="1" height="1" fill="#2a9a70"/><rect x="3" y="6" width="1" height="1" fill="#2a9a70"/><rect x="4" y="6" width="1" height="1" fill="#2a9a70"/><rect x="5" y="6" width="1" height="1" fill="#000"/><rect x="6" y="6" width="1" height="1" fill="#2a9a70"/><rect x="7" y="6" width="1" height="1" fill="#2a9a70"/><rect x="8" y="6" width="1" height="1" fill="#2a9a70"/><rect x="9" y="6" width="1" height="1" fill="#000"/><rect x="2" y="7" width="1" height="1" fill="#000"/><rect x="3" y="7" width="1" height="1" fill="#000"/><rect x="4" y="7" width="1" height="1" fill="#2a9a70"/><rect x="5" y="7" width="1" height="1" fill="#2a9a70"/><rect x="6" y="7" width="1" height="1" fill="#2a9a70"/><rect x="7" y="7" width="1" height="1" fill="#000"/><rect x="8" y="7" width="1" height="1" fill="#000"/><rect x="4" y="8" width="1" height="1" fill="#000"/><rect x="5" y="8" width="1" height="1" fill="#000"/><rect x="6" y="8" width="1" height="1" fill="#000"/><rect x="5" y="9" width="1" height="1" fill="#000"/><rect x="6" y="9" width="1" height="1" fill="#000"/><rect x="5" y="10" width="1" height="1" fill="#000"/><rect x="6" y="10" width="1" height="1" fill="#000"/><rect x="5" y="11" width="1" height="1" fill="#000"/><rect x="6" y="11" width="1" height="1" fill="#000"/><rect x="3" y="12" width="1" height="1" fill="#000"/><rect x="4" y="12" width="1" height="1" fill="#000"/><rect x="5" y="12" width="1" height="1" fill="#000"/><rect x="6" y="12" width="1" height="1" fill="#000"/><rect x="7" y="12" width="1" height="1" fill="#000"/><rect x="8" y="12" width="1" height="1" fill="#000"/><rect x="2" y="13" width="1" height="1" fill="#000"/><rect x="3" y="13" width="1" height="1" fill="#000"/><rect x="4" y="13" width="1" height="1" fill="#000"/><rect x="5" y="13" width="1" height="1" fill="#000"/><rect x="6" y="13" width="1" height="1" fill="#000"/><rect x="7" y="13" width="1" height="1" fill="#000"/><rect x="8" y="13" width="1" height="1" fill="#000"/><rect x="9" y="13" width="1" height="1" fill="#000"/></g></svg>
<div class="t" style="top:328px;left:920.30px;transform:scaleX(0.8710);">Projekte (5)</div>
<svg class="a" style="left:99px;top:346px;" width="11" height="15" viewBox="0 0 11 15"><g shape-rendering="crispEdges"><rect x="0" y="0" width="10" height="14" fill="#fff"/><rect x="10" y="1" width="1" height="14" fill="#606060"/><rect x="1" y="14" width="10" height="1" fill="#606060"/><rect x="2" y="0" width="1" height="1" fill="#c00010"/><rect x="3" y="0" width="1" height="1" fill="#c00010"/><rect x="4" y="0" width="1" height="1" fill="#c00010"/><rect x="5" y="0" width="1" height="1" fill="#c00010"/><rect x="2" y="1" width="1" height="1" fill="#c00010"/><rect x="6" y="1" width="1" height="1" fill="#c00010"/><rect x="2" y="2" width="1" height="1" fill="#c00010"/><rect x="6" y="2" width="1" height="1" fill="#c00010"/><rect x="2" y="3" width="1" height="1" fill="#c00010"/><rect x="3" y="3" width="1" height="1" fill="#c00010"/><rect x="4" y="3" width="1" height="1" fill="#c00010"/><rect x="5" y="3" width="1" height="1" fill="#c00010"/><rect x="2" y="4" width="1" height="1" fill="#c00010"/><rect x="5" y="4" width="1" height="1" fill="#c00010"/><rect x="2" y="5" width="1" height="1" fill="#c00010"/><rect x="6" y="5" width="1" height="1" fill="#c00010"/><rect x="0" y="7" width="2" height="1" fill="#000"/><rect x="3" y="7" width="2" height="1" fill="#000"/><rect x="6" y="7" width="3" height="1" fill="#000"/><rect x="0" y="9" width="2" height="1" fill="#000"/><rect x="3" y="9" width="1" height="1" fill="#000"/><rect x="5" y="9" width="2" height="1" fill="#000"/><rect x="8" y="9" width="1" height="1" fill="#000"/><rect x="1" y="12" width="3" height="1" fill="#1020a0"/></g></svg>
<div class="t" style="top:348px;left:116.30px;transform:scaleX(0.8770);">Rechnung (-)</div>
<svg class="a" style="left:334px;top:346px;" width="11" height="15" viewBox="0 0 11 15"><g shape-rendering="crispEdges"><rect x="0" y="0" width="10" height="14" fill="#fff"/><rect x="10" y="1" width="1" height="14" fill="#606060"/><rect x="1" y="14" width="10" height="1" fill="#606060"/><rect x="2" y="0" width="1" height="1" fill="#000"/><rect x="6" y="0" width="1" height="1" fill="#000"/><rect x="2" y="1" width="1" height="1" fill="#000"/><rect x="6" y="1" width="1" height="1" fill="#000"/><rect x="2" y="2" width="1" height="1" fill="#000"/><rect x="6" y="2" width="1" height="1" fill="#000"/><rect x="3" y="3" width="1" height="1" fill="#000"/><rect x="5" y="3" width="1" height="1" fill="#000"/><rect x="3" y="4" width="1" height="1" fill="#000"/><rect x="5" y="4" width="1" height="1" fill="#000"/><rect x="4" y="5" width="1" height="1" fill="#000"/><rect x="0" y="7" width="2" height="1" fill="#000"/><rect x="3" y="7" width="2" height="1" fill="#000"/><rect x="6" y="7" width="3" height="1" fill="#000"/><rect x="0" y="9" width="2" height="1" fill="#000"/><rect x="3" y="9" width="1" height="1" fill="#000"/><rect x="5" y="9" width="2" height="1" fill="#000"/><rect x="8" y="9" width="1" height="1" fill="#000"/><rect x="1" y="12" width="3" height="1" fill="#1020a0"/></g></svg>
<div class="t" style="top:348px;left:351.80px;transform:scaleX(0.8770);color:#1414a8;">Verträge (6)</div>
<svg class="a" style="left:561px;top:346px;" width="14" height="14" viewBox="0 0 14 14"><g shape-rendering="crispEdges"><rect x="0" y="3" width="11" height="10" fill="#000"/><rect x="1" y="4" width="9" height="8" fill="#fff"/><rect x="2" y="0" width="11" height="11" fill="#000"/><rect x="3" y="1" width="9" height="9" fill="#fff"/><rect x="5" y="2" width="1" height="7" fill="#000"/><rect x="6" y="5" width="1" height="1" fill="#000"/><rect x="7" y="4" width="1" height="1" fill="#000"/><rect x="8" y="3" width="1" height="1" fill="#000"/><rect x="9" y="2" width="1" height="1" fill="#000"/><rect x="7" y="6" width="1" height="1" fill="#000"/><rect x="8" y="7" width="1" height="1" fill="#000"/><rect x="9" y="8" width="1" height="1" fill="#000"/></g></svg>
<div class="t" style="top:348px;left:581.70px;transform:scaleX(0.8797);">Rechnungsempfänger (-)</div>
<svg class="a" style="left:855px;top:346px;" width="11" height="15" viewBox="0 0 11 15"><g shape-rendering="crispEdges"><rect x="0" y="0" width="10" height="14" fill="#fff"/><rect x="10" y="1" width="1" height="14" fill="#606060"/><rect x="1" y="14" width="10" height="1" fill="#606060"/><rect x="4" y="0" width="1" height="1" fill="#000"/><rect x="3" y="1" width="1" height="1" fill="#000"/><rect x="4" y="1" width="1" height="1" fill="#000"/><rect x="5" y="1" width="1" height="1" fill="#000"/><rect x="6" y="1" width="1" height="1" fill="#000"/><rect x="2" y="2" width="1" height="1" fill="#000"/><rect x="4" y="2" width="1" height="1" fill="#000"/><rect x="3" y="3" width="1" height="1" fill="#000"/><rect x="4" y="3" width="1" height="1" fill="#000"/><rect x="5" y="3" width="1" height="1" fill="#000"/><rect x="4" y="4" width="1" height="1" fill="#000"/><rect x="6" y="4" width="1" height="1" fill="#000"/><rect x="2" y="5" width="1" height="1" fill="#000"/><rect x="3" y="5" width="1" height="1" fill="#000"/><rect x="4" y="5" width="1" height="1" fill="#000"/><rect x="5" y="5" width="1" height="1" fill="#000"/><rect x="0" y="7" width="2" height="1" fill="#000"/><rect x="3" y="7" width="2" height="1" fill="#000"/><rect x="6" y="7" width="3" height="1" fill="#000"/><rect x="0" y="9" width="2" height="1" fill="#000"/><rect x="3" y="9" width="1" height="1" fill="#000"/><rect x="5" y="9" width="2" height="1" fill="#000"/><rect x="8" y="9" width="1" height="1" fill="#000"/><rect x="1" y="12" width="3" height="1" fill="#1020a0"/></g></svg>
<div class="t" style="top:348px;left:872.60px;transform:scaleX(0.8531);">Einsätze (7)</div>
<div class="a" style="left:22px;top:365px;width:982px;height:23px;background:#f0f0f0;"></div>
<div class="a" style="left:24px;top:370px;width:77px;height:19px;background:#eeeeee;"></div>
<div class="a" style="left:24px;top:370px;width:77px;height:1px;background:#ffffff;"></div>
<div class="a" style="left:24px;top:370px;width:1px;height:19px;background:#ffffff;"></div>
<div class="a" style="left:101px;top:368px;width:81px;height:21px;background:#f4f4f4;"></div>
<div class="a" style="left:101px;top:368px;width:81px;height:1px;background:#ffffff;"></div>
<div class="a" style="left:101px;top:368px;width:1px;height:21px;background:#ffffff;"></div>
<div class="a" style="left:180px;top:369px;width:1px;height:20px;background:#6e6e6e;"></div>
<div class="a" style="left:181px;top:369px;width:1px;height:20px;background:#a0a0a0;"></div>
<div class="a" style="left:182px;top:370px;width:102px;height:19px;background:#eeeeee;"></div>
<div class="a" style="left:182px;top:370px;width:102px;height:1px;background:#ffffff;"></div>
<div class="a" style="left:182px;top:370px;width:1px;height:19px;background:#ffffff;"></div>
<div class="a" style="left:282px;top:371px;width:1px;height:18px;background:#5e5e5e;"></div>
<div class="a" style="left:283px;top:371px;width:1px;height:18px;background:#c4c4c4;"></div>
<svg class="a" style="left:33px;top:371px;" width="11" height="15" viewBox="0 0 11 15"><g shape-rendering="crispEdges"><rect x="0" y="0" width="10" height="14" fill="#fff"/><rect x="10" y="1" width="1" height="14" fill="#606060"/><rect x="1" y="14" width="10" height="1" fill="#606060"/><rect x="1" y="1" width="2" height="1" fill="#000"/><rect x="6" y="1" width="2" height="1" fill="#000"/><rect x="0" y="4" width="3" height="1" fill="#000"/><rect x="0" y="7" width="2" height="1" fill="#000"/><rect x="3" y="7" width="2" height="1" fill="#000"/><rect x="6" y="7" width="3" height="1" fill="#000"/><rect x="0" y="9" width="2" height="1" fill="#000"/><rect x="3" y="9" width="1" height="1" fill="#000"/><rect x="5" y="9" width="2" height="1" fill="#000"/><rect x="8" y="9" width="1" height="1" fill="#000"/><rect x="1" y="12" width="3" height="1" fill="#1020a0"/></g></svg>
<div class="t" style="top:373px;left:50.00px;transform:scaleX(0.8770);">Allgemein</div>
<div class="t" style="top:373px;left:114.00px;">€</div>
<div class="t" style="top:373px;left:129.70px;transform:scaleX(0.8770);color:#1414a8;">Finanzen</div>
<svg class="a" style="left:187px;top:371px;" width="14" height="13" viewBox="0 0 14 13"><path d="M3 0 H10 L13 3 V9 L10 12 H3 L0 9 V3Z" fill="#fff"/><g shape-rendering="crispEdges"><rect x="3" y="0" width="1" height="1" fill="#000"/><rect x="4" y="0" width="1" height="1" fill="#000"/><rect x="5" y="0" width="1" height="1" fill="#000"/><rect x="6" y="0" width="1" height="1" fill="#000"/><rect x="7" y="0" width="1" height="1" fill="#000"/><rect x="8" y="0" width="1" height="1" fill="#000"/><rect x="9" y="0" width="1" height="1" fill="#000"/><rect x="2" y="1" width="1" height="1" fill="#000"/><rect x="10" y="1" width="1" height="1" fill="#000"/><rect x="1" y="2" width="1" height="1" fill="#000"/><rect x="6" y="2" width="1" height="1" fill="#000"/><rect x="11" y="2" width="1" height="1" fill="#000"/><rect x="0" y="3" width="1" height="1" fill="#000"/><rect x="3" y="3" width="1" height="1" fill="#000"/><rect x="6" y="3" width="1" height="1" fill="#000"/><rect x="9" y="3" width="1" height="1" fill="#000"/><rect x="12" y="3" width="1" height="1" fill="#000"/><rect x="0" y="4" width="1" height="1" fill="#000"/><rect x="6" y="4" width="1" height="1" fill="#000"/><rect x="12" y="4" width="1" height="1" fill="#000"/><rect x="0" y="5" width="1" height="1" fill="#000"/><rect x="2" y="5" width="1" height="1" fill="#000"/><rect x="6" y="5" width="1" height="1" fill="#000"/><rect x="10" y="5" width="1" height="1" fill="#000"/><rect x="12" y="5" width="1" height="1" fill="#000"/><rect x="0" y="6" width="1" height="1" fill="#000"/><rect x="7" y="6" width="1" height="1" fill="#000"/><rect x="12" y="6" width="1" height="1" fill="#000"/><rect x="0" y="7" width="1" height="1" fill="#000"/><rect x="4" y="7" width="1" height="1" fill="#000"/><rect x="8" y="7" width="1" height="1" fill="#000"/><rect x="12" y="7" width="1" height="1" fill="#000"/><rect x="0" y="8" width="1" height="1" fill="#000"/><rect x="12" y="8" width="1" height="1" fill="#000"/><rect x="1" y="9" width="1" height="1" fill="#000"/><rect x="6" y="9" width="1" height="1" fill="#000"/><rect x="11" y="9" width="1" height="1" fill="#000"/><rect x="2" y="10" width="1" height="1" fill="#000"/><rect x="10" y="10" width="1" height="1" fill="#000"/><rect x="3" y="11" width="1" height="1" fill="#000"/><rect x="4" y="11" width="1" height="1" fill="#000"/><rect x="5" y="11" width="1" height="1" fill="#000"/><rect x="6" y="11" width="1" height="1" fill="#000"/><rect x="7" y="11" width="1" height="1" fill="#000"/><rect x="8" y="11" width="1" height="1" fill="#000"/><rect x="9" y="11" width="1" height="1" fill="#000"/><rect x="13" y="3" width="1" height="8" fill="#a0a0a0"/><rect x="4" y="12" width="8" height="1" fill="#a0a0a0"/></g></svg>
<div class="t" style="top:373px;left:206.00px;transform:scaleX(0.8770);">Arbeitsstunden</div>
<div class="a" style="left:22px;top:388px;width:962px;height:310px;background:#f0f0f0;"></div>
<div class="a" style="left:22px;top:388px;width:962px;height:1px;background:#ffffff;"></div>
<div class="a" style="left:22px;top:388px;width:1px;height:310px;background:#ffffff;"></div>
<div class="a" style="left:17px;top:698px;width:988px;height:1px;background:#6a6a6a;"></div>
<div class="a" style="left:1004px;top:365px;width:1px;height:334px;background:#6a6a6a;"></div>
<div class="a" style="left:983px;top:388px;width:1px;height:310px;background:#6a6a6a;"></div>
<div class="a" style="left:984px;top:367px;width:17px;height:328px;background:#f0f0f0;"></div>
<div class="a" style="left:1000px;top:367px;width:1px;height:328px;background:#6a6a6a;"></div>
<div class="a" style="left:984px;top:367px;width:16px;height:17px;background:#f4f4f4;border-left:1px solid #fff;border-top:1px solid #fff;border-bottom:2px solid #6a6a6a;"></div>
<svg class="a" style="left:987px;top:372px;" width="10" height="6" viewBox="0 0 10 6"><path d="M0.5 5.5 L5 0.5 L9.5 5.5Z" fill="#000"/></svg>
<div class="a" style="left:984px;top:673px;width:16px;height:1px;background:#6a6a6a;"></div>
<div class="a" style="left:984px;top:674px;width:16px;height:21px;background:#f4f4f4;border-left:1px solid #fff;border-top:1px solid #fff;border-bottom:2px solid #6a6a6a;"></div>
<svg class="a" style="left:987px;top:683px;" width="10" height="6" viewBox="0 0 10 6"><path d="M0.5 0.5 L5 5.5 L9.5 0.5Z" fill="#000"/></svg>
<div class="t" style="top:403px;left:57.80px;transform:scaleX(0.8770);">Überstundenbasis</div>
<div class="a" style="left:148px;top:400px;width:45px;height:20px;background:#fff;border:1px solid #6c66b0;"></div>
<div class="t" style="top:403px;left:158.55px;transform:scaleX(0.8770);">100,00</div>
<div class="t" style="top:403px;left:196.90px;transform:scaleX(0.8727);">% vom Basis-Verechnungssatz</div>
<div class="t" style="top:433px;left:57.80px;transform:scaleX(0.8770);">Überstunden 1</div>
<div class="a" style="left:148px;top:430px;width:45px;height:20px;background:#fff;border:1px solid #6c66b0;"></div>
<div class="t" style="top:433px;left:164.69px;transform:scaleX(0.8770);">25,00</div>
<div class="t" style="top:433px;left:196.90px;transform:scaleX(0.8770);">%</div>
<div class="t" style="top:454px;left:57.80px;transform:scaleX(0.8770);">Überstunden 2</div>
<div class="a" style="left:148px;top:451px;width:45px;height:20px;background:#fff;border:1px solid #6c66b0;"></div>
<div class="t" style="top:454px;left:169.95px;transform:scaleX(0.8770);">0,00</div>
<div class="t" style="top:454px;left:196.90px;transform:scaleX(0.8770);">%</div>
<div class="t" style="top:479px;left:57.80px;transform:scaleX(0.8770);">Spätschichtzulage</div>
<div class="a" style="left:148px;top:476px;width:45px;height:20px;background:#fff;border:1px solid #6c66b0;"></div>
<div class="t" style="top:479px;left:169.95px;transform:scaleX(0.8770);">0,00</div>
<div class="t" style="top:479px;left:196.90px;transform:scaleX(0.8770);">%</div>
<div class="t" style="top:501px;left:57.80px;transform:scaleX(0.8770);">Nachtarbeit</div>
<div class="a" style="left:148px;top:498px;width:45px;height:20px;background:#fff;border:1px solid #6c66b0;"></div>
<div class="t" style="top:501px;left:164.69px;transform:scaleX(0.8770);">35,00</div>
<div class="t" style="top:501px;left:196.90px;transform:scaleX(0.8770);">%</div>
<div class="t" style="top:525px;left:57.80px;transform:scaleX(0.8770);">Samstagsarbeit 1</div>
<div class="a" style="left:148px;top:522px;width:45px;height:20px;background:#fff;border:1px solid #6c66b0;"></div>
<div class="t" style="top:525px;left:164.69px;transform:scaleX(0.8770);">50,00</div>
<div class="t" style="top:525px;left:196.90px;transform:scaleX(0.8770);">%</div>
<div class="t" style="top:547px;left:57.80px;transform:scaleX(0.8770);">Samstagsarbeit 2</div>
<div class="a" style="left:148px;top:544px;width:45px;height:20px;background:#fff;border:1px solid #6c66b0;"></div>
<div class="t" style="top:547px;left:169.95px;transform:scaleX(0.8770);">0,00</div>
<div class="t" style="top:547px;left:196.90px;transform:scaleX(0.8770);">%</div>
<div class="t" style="top:574px;left:57.80px;transform:scaleX(0.8770);">Sonntagszuschlag</div>
<div class="a" style="left:148px;top:571px;width:45px;height:20px;background:#fff;border:1px solid #6c66b0;"></div>
<div class="t" style="top:574px;left:164.69px;transform:scaleX(0.8770);">25,00</div>
<div class="t" style="top:574px;left:196.90px;transform:scaleX(0.8770);">%</div>
<div class="t" style="top:596px;left:57.80px;transform:scaleX(0.8770);">Feiertagszuschlag</div>
<div class="a" style="left:148px;top:593px;width:45px;height:20px;background:#fff;border:1px solid #6c66b0;"></div>
<div class="t" style="top:596px;left:164.69px;transform:scaleX(0.8770);">50,00</div>
<div class="t" style="top:596px;left:196.90px;transform:scaleX(0.8770);">%</div>
<div class="t" style="top:618px;left:57.80px;transform:scaleX(0.8770);">höhere Feiertage</div>
<div class="a" style="left:148px;top:615px;width:45px;height:20px;background:#fff;border:1px solid #6c66b0;"></div>
<div class="t" style="top:618px;left:158.55px;transform:scaleX(0.8770);">100,00</div>
<div class="t" style="top:618px;left:196.90px;transform:scaleX(0.8770);">%</div>
<div class="t" style="top:454px;left:231.60px;transform:scaleX(0.8770);">ab</div>
<div class="a" style="left:268px;top:451px;width:35px;height:20px;background:#c4c4c4;border:1px solid #6c66b0;"></div>
<div class="t" style="top:454px;left:279.95px;transform:scaleX(0.8770);">0,00</div>
<div class="t" style="top:454px;left:306.60px;transform:scaleX(0.8770);">Std. mehr am Tag</div>
<div class="t" style="top:479px;left:231.90px;transform:scaleX(0.8770);">von</div>
<div class="a" style="left:268px;top:476px;width:35px;height:20px;background:#c4c4c4;border:1px solid #6c66b0;"></div>
<div class="t" style="top:479px;left:271.88px;transform:scaleX(0.8770);">__:__</div>
<div class="t" style="top:479px;left:319.50px;transform:scaleX(0.8770);">bis</div>
<div class="a" style="left:336px;top:476px;width:35px;height:20px;background:#c4c4c4;border:1px solid #6c66b0;"></div>
<div class="t" style="top:479px;left:339.88px;transform:scaleX(0.8770);">__:__</div>
<div class="t" style="top:501px;left:231.90px;transform:scaleX(0.8770);">von</div>
<div class="a" style="left:268px;top:498px;width:35px;height:20px;background:#fff;border:1px solid #6c66b0;"></div>
<div class="t" style="top:501px;left:274.69px;transform:scaleX(0.8770);">22:00</div>
<div class="t" style="top:501px;left:319.50px;transform:scaleX(0.8770);">bis</div>
<div class="a" style="left:336px;top:498px;width:35px;height:20px;background:#fff;border:1px solid #6c66b0;"></div>
<div class="t" style="top:501px;left:342.69px;transform:scaleX(0.8770);">06:00</div>
<div class="t" style="top:547px;left:231.90px;transform:scaleX(0.8770);">ab der</div>
<div class="a" style="left:268px;top:544px;width:35px;height:20px;background:#c4c4c4;border:1px solid #6c66b0;"></div>
<div class="t" style="top:547px;left:294.86px;transform:scaleX(0.8770);">0</div>
<div class="t" style="top:547px;left:306.20px;transform:scaleX(0.8770);">. Stunde</div>
<div class="a" style="left:58px;top:649px;width:13px;height:13px;background:#fff;border:1px solid #6c66b0;"></div>
<svg class="a" style="left:60px;top:651px;" width="9" height="9" viewBox="0 0 9 9"><path d="M1.5 1.5 L7.5 7.5 M7.5 1.5 L1.5 7.5" stroke="#000" stroke-width="2.2"/></svg>
<div class="t" style="top:650px;left:73.80px;transform:scaleX(0.8770);">nur höchster Zuschlag</div>
<div class="a" style="left:58px;top:669px;width:13px;height:13px;background:#fff;border:1px solid #6c66b0;"></div>
<div class="t" style="top:670px;left:73.80px;transform:scaleX(0.8578);">Fahrtzeit zum Einsatzort ist Arbeitszeit</div>
<div class="a" style="left:258px;top:665px;width:36px;height:21px;background:#c4c4c4;border:1px solid #6c66b0;"></div>
<div class="t" style="top:668px;left:285.86px;transform:scaleX(0.8770);">0</div>
<div class="t" style="top:668px;left:296.70px;transform:scaleX(0.8770);">% vom Verrechnungssatz</div>
<div class="t" style="top:405px;left:413.00px;transform:scaleX(0.8770);">Mindeststunden</div>
<div class="t" style="top:417px;left:413.00px;transform:scaleX(0.8770);">erforderlich</div>
<div class="t" style="top:405px;left:505.70px;transform:scaleX(0.8770);">Zuschlag</div>
<div class="t" style="top:417px;left:505.70px;transform:scaleX(0.8770);">für alle Stunden</div>
<div class="a" style="left:412px;top:432px;width:13px;height:13px;background:#fff;border:1px solid #6c66b0;"></div>
<div class="a" style="left:507px;top:432px;width:13px;height:13px;background:#fff;border:1px solid #6c66b0;"></div>
<div class="a" style="left:412px;top:453px;width:13px;height:13px;background:#fff;border:1px solid #6c66b0;"></div>
<div class="a" style="left:507px;top:453px;width:13px;height:13px;background:#fff;border:1px solid #6c66b0;"></div>
<div class="a" style="left:412px;top:483px;width:13px;height:13px;background:#c4c4c4;border:1px solid #6c66b0;"></div>
<div class="a" style="left:507px;top:483px;width:13px;height:13px;background:#c4c4c4;border:1px solid #6c66b0;"></div>
<div class="a" style="left:412px;top:505px;width:13px;height:13px;background:#fff;border:1px solid #6c66b0;"></div>
<div class="a" style="left:507px;top:505px;width:13px;height:13px;background:#c4c4c4;border:1px solid #6c66b0;"></div>
<div class="a" style="left:412px;top:529px;width:13px;height:13px;background:#fff;border:1px solid #6c66b0;"></div>
<div class="a" style="left:507px;top:529px;width:13px;height:13px;background:#c4c4c4;border:1px solid #6c66b0;"></div>
<div class="a" style="left:412px;top:551px;width:13px;height:13px;background:#c4c4c4;border:1px solid #6c66b0;"></div>
<div class="a" style="left:507px;top:551px;width:13px;height:13px;background:#c4c4c4;border:1px solid #6c66b0;"></div>
<div class="a" style="left:412px;top:577px;width:13px;height:13px;background:#fff;border:1px solid #6c66b0;"></div>
<div class="a" style="left:507px;top:577px;width:13px;height:13px;background:#c4c4c4;border:1px solid #6c66b0;"></div>
<div class="a" style="left:412px;top:600px;width:13px;height:13px;background:#fff;border:1px solid #6c66b0;"></div>
<div class="a" style="left:507px;top:600px;width:13px;height:13px;background:#c4c4c4;border:1px solid #6c66b0;"></div>
<div class="a" style="left:412px;top:622px;width:13px;height:13px;background:#fff;border:1px solid #6c66b0;"></div>
<div class="a" style="left:507px;top:622px;width:13px;height:13px;background:#c4c4c4;border:1px solid #6c66b0;"></div>
<div class="a" style="left:670px;top:397px;width:99px;height:25px;background:linear-gradient(#fdfdfd,#eaeaea 50%,#d9d9d9);border:1px solid #303030;border-radius:4px;"></div>
<div class="a" style="left:736px;top:398px;width:1px;height:23px;background:#202020;"></div>
<svg class="a" style="left:678px;top:401px;" width="11" height="15" viewBox="0 0 11 15"><g shape-rendering="crispEdges"><rect x="0" y="0" width="10" height="14" fill="#fff"/><rect x="10" y="1" width="1" height="14" fill="#606060"/><rect x="1" y="14" width="10" height="1" fill="#606060"/><rect x="2" y="0" width="1" height="1" fill="#d01010"/><rect x="6" y="0" width="1" height="1" fill="#d01010"/><rect x="2" y="1" width="1" height="1" fill="#d01010"/><rect x="3" y="1" width="1" height="1" fill="#d01010"/><rect x="5" y="1" width="1" height="1" fill="#d01010"/><rect x="6" y="1" width="1" height="1" fill="#d01010"/><rect x="2" y="2" width="1" height="1" fill="#d01010"/><rect x="4" y="2" width="1" height="1" fill="#d01010"/><rect x="6" y="2" width="1" height="1" fill="#d01010"/><rect x="2" y="3" width="1" height="1" fill="#d01010"/><rect x="6" y="3" width="1" height="1" fill="#d01010"/><rect x="2" y="4" width="1" height="1" fill="#d01010"/><rect x="6" y="4" width="1" height="1" fill="#d01010"/><rect x="2" y="5" width="1" height="1" fill="#d01010"/><rect x="6" y="5" width="1" height="1" fill="#d01010"/><rect x="0" y="7" width="2" height="1" fill="#000"/><rect x="3" y="7" width="2" height="1" fill="#000"/><rect x="6" y="7" width="3" height="1" fill="#000"/><rect x="0" y="9" width="2" height="1" fill="#000"/><rect x="3" y="9" width="1" height="1" fill="#000"/><rect x="5" y="9" width="2" height="1" fill="#000"/><rect x="8" y="9" width="1" height="1" fill="#000"/><rect x="1" y="12" width="3" height="1" fill="#1020a0"/></g></svg>
<div class="t" style="top:404px;left:698.70px;transform:scaleX(0.8459);">Muster</div>
<svg class="a" style="left:743px;top:402px;" width="14" height="13" viewBox="0 0 14 13"><rect x="0.5" y="0.5" width="13" height="12" rx="1" fill="#10208a"/><rect x="3" y="1" width="8" height="5" fill="#fff"/><rect x="4" y="8" width="6" height="4" fill="#e0e0f0"/><rect x="6" y="9" width="1.5" height="2.5" fill="#10208a"/></svg>
<div class="t" style="top:442px;left:605.20px;transform:scaleX(0.8770);">Bezeichnung</div>
<div class="a" style="left:604px;top:456px;width:130px;height:20px;background:#fff;border:1px solid #6c66b0;"></div>
<div class="t" style="top:459px;left:606.50px;transform:scaleX(0.8770);">erschwerte Arbeit</div>
<div class="a" style="left:741px;top:456px;width:45px;height:20px;background:#fff;border:1px solid #6c66b0;"></div>
<div class="t" style="top:459px;left:757.69px;transform:scaleX(0.8770);">15,00</div>
<div class="t" style="top:459px;left:789.80px;transform:scaleX(0.8770);">% / Stunde</div>
<div class="a" style="left:604px;top:478px;width:130px;height:20px;background:#fff;border:1px solid #6c66b0;"></div>
<div class="a" style="left:741px;top:478px;width:45px;height:20px;background:#c4c4c4;border:1px solid #6c66b0;"></div>
<div class="t" style="top:481px;left:762.95px;transform:scaleX(0.8770);">0,00</div>
<div class="t" style="top:481px;left:789.80px;transform:scaleX(0.8770);">% / Stunde</div>
<div class="a" style="left:604px;top:500px;width:130px;height:20px;background:#c4c4c4;border:1px solid #6c66b0;"></div>
<div class="a" style="left:741px;top:500px;width:45px;height:20px;background:#c4c4c4;border:1px solid #6c66b0;"></div>
<div class="t" style="top:503px;left:762.95px;transform:scaleX(0.8770);">0,00</div>
<div class="t" style="top:503px;left:789.80px;transform:scaleX(0.8770);">% / Stunde</div>
<div class="a" style="left:604px;top:524px;width:130px;height:20px;background:#fff;border:1px solid #6c66b0;"></div>
<div class="t" style="top:527px;left:606.50px;transform:scaleX(0.8770);">Schmutzzulage</div>
<div class="a" style="left:741px;top:524px;width:45px;height:20px;background:#fff;border:1px solid #6c66b0;"></div>
<div class="t" style="top:527px;left:762.95px;transform:scaleX(0.8770);">2,50</div>
<div class="t" style="top:527px;left:789.80px;transform:scaleX(0.8770);">Betrag/Stunde</div>
<div class="a" style="left:604px;top:546px;width:130px;height:20px;background:#fff;border:1px solid #6c66b0;"></div>
<div class="a" style="left:741px;top:546px;width:45px;height:20px;background:#c4c4c4;border:1px solid #6c66b0;"></div>
<div class="t" style="top:549px;left:789.80px;transform:scaleX(0.8770);">Betrag/Stunde</div>
<div class="a" style="left:604px;top:571px;width:130px;height:20px;background:#fff;border:1px solid #6c66b0;"></div>
<div class="a" style="left:741px;top:571px;width:45px;height:20px;background:#c4c4c4;border:1px solid #6c66b0;"></div>
<div class="t" style="top:574px;left:789.80px;transform:scaleX(0.8770);">Betrag arbeitstäglich</div>
<div class="a" style="left:604px;top:594px;width:130px;height:20px;background:#c4c4c4;border:1px solid #6c66b0;"></div>
<div class="a" style="left:741px;top:594px;width:45px;height:20px;background:#c4c4c4;border:1px solid #6c66b0;"></div>
<div class="t" style="top:597px;left:789.80px;transform:scaleX(0.8770);">Betrag arbeitstäglich</div>
<div class="t" style="top:651px;left:426.70px;transform:scaleX(0.8770);">min.</div>
<div class="a" style="left:449px;top:648px;width:45px;height:20px;background:#fff;border:1px solid #6c66b0;"></div>
<div class="t" style="top:651px;left:477.09px;transform:scaleX(0.8770);">0,0</div>
<div class="t" style="top:651px;left:497.60px;transform:scaleX(0.8770);">Stunden</div>
<div class="a" style="left:547px;top:651px;width:13px;height:13px;background:#fff;border:1px solid #6c66b0;"></div>
<div class="t" style="top:651px;left:561.40px;transform:scaleX(0.8890);">bei Unterschreitung berechnen</div>
<div class="t" style="top:676px;left:500.20px;transform:scaleX(0.8770);">Reihenfolge</div>
<div class="a" style="left:561px;top:672px;width:159px;height:20px;background:#ececec;border:1px solid #6c66b0;"></div>
<div class="t" style="top:675px;left:563.50px;transform:scaleX(0.8770);">erst Tage, dann Zuschläge</div>
<div class="a" style="left:700px;top:672px;width:20px;height:20px;background:linear-gradient(#fafafa,#dcdcdc);border:1px solid #10102a;border-right-width:2px;border-bottom-width:2px;"></div>
<svg class="a" style="left:703px;top:677px;" width="12" height="10" viewBox="0 0 12 10"><defs><linearGradient id="g" x1="0" y1="0" x2="0" y2="1"><stop offset="0" stop-color="#5a3ae8"/><stop offset="1" stop-color="#c0203a"/></linearGradient></defs><path d="M0.5 0.5 H11.5 L6 9.5 Z" fill="url(#g)" stroke="#000" stroke-width="1"/></svg>
<div class="a" style="left:7px;top:707px;width:1007px;height:23px;background:#f0f0f0;"></div>
<div class="a" style="left:7px;top:707px;width:1007px;height:2px;background:#fafafa;"></div>
<svg class="a" style="left:10px;top:716px;" width="11" height="11" viewBox="0 0 11 11"><path d="M5.5 0.5 L7 1.5 L9 1.8 L9.5 4 L10.5 5.5 L9.5 7 L9 9.2 L7 9.5 L5.5 10.5 L4 9.5 L2 9.2 L1.5 7 L0.5 5.5 L1.5 4 L2 1.8 L4 1.5Z" fill="#0a8a1a"/><circle cx="5.5" cy="5.5" r="2.5" fill="#20b030"/></svg>
<div class="a" style="left:25px;top:711px;width:58px;height:18px;background:#f0f0f0;border-top:1px solid #a0a0a0;border-left:1px solid #a0a0a0;"></div>
<div class="t" style="top:715px;left:26.50px;transform:scaleX(0.8770);">RI</div>
<div class="a" style="left:85px;top:711px;width:929px;height:18px;background:#f0f0f0;border-top:1px solid #a0a0a0;border-left:1px solid #a0a0a0;"></div>
<div class="t" style="top:714px;left:87.70px;transform:scaleX(0.8770);">Ok</div>
<svg class="a" style="left:902px;top:712px;" width="16" height="14" viewBox="0 0 16 14"><g shape-rendering="crispEdges"><rect x="5" y="0" width="1" height="1" fill="#000"/><rect x="6" y="0" width="1" height="1" fill="#000"/><rect x="9" y="0" width="1" height="1" fill="#000"/><rect x="10" y="0" width="1" height="1" fill="#000"/><rect x="13" y="0" width="1" height="1" fill="#000"/><rect x="14" y="0" width="1" height="1" fill="#000"/><rect x="1" y="2" width="15" height="1" fill="#000"/><rect x="1" y="6" width="15" height="1" fill="#000"/><rect x="1" y="10" width="15" height="1" fill="#000"/><rect x="2" y="2" width="1" height="12" fill="#000"/><rect x="0" y="4" width="1" height="1" fill="#000"/><rect x="5" y="4" width="1" height="1" fill="#000"/><rect x="6" y="4" width="1" height="1" fill="#000"/><rect x="8" y="4" width="1" height="1" fill="#000"/><rect x="9" y="4" width="1" height="1" fill="#000"/><rect x="10" y="4" width="1" height="1" fill="#000"/><rect x="12" y="4" width="1" height="1" fill="#000"/><rect x="13" y="4" width="1" height="1" fill="#000"/><rect x="14" y="4" width="1" height="1" fill="#000"/><rect x="0" y="8" width="1" height="1" fill="#000"/><rect x="5" y="8" width="1" height="1" fill="#000"/><rect x="6" y="8" width="1" height="1" fill="#000"/><rect x="8" y="8" width="1" height="1" fill="#000"/><rect x="9" y="8" width="1" height="1" fill="#000"/><rect x="10" y="8" width="1" height="1" fill="#000"/><rect x="12" y="8" width="1" height="1" fill="#000"/><rect x="13" y="8" width="1" height="1" fill="#000"/><rect x="14" y="8" width="1" height="1" fill="#000"/><rect x="0" y="12" width="1" height="1" fill="#000"/><rect x="5" y="12" width="1" height="1" fill="#000"/><rect x="6" y="12" width="1" height="1" fill="#000"/><rect x="8" y="12" width="1" height="1" fill="#000"/><rect x="9" y="12" width="1" height="1" fill="#000"/><rect x="10" y="12" width="1" height="1" fill="#000"/><rect x="12" y="12" width="1" height="1" fill="#000"/><rect x="13" y="12" width="1" height="1" fill="#000"/><rect x="14" y="12" width="1" height="1" fill="#000"/></g></svg>
<svg class="a" style="left:920px;top:715px;" width="17" height="10" viewBox="0 0 17 10"><rect x="0" y="1" width="17" height="8" fill="#f8f030"/><text x="8.5" y="8" font-family="Liberation Sans" font-size="8" font-weight="bold" fill="#000" text-anchor="middle">SMS</text><path d="M0 9.5h17" stroke="#000"/></svg>
<svg class="a" style="left:938px;top:711px;" width="17" height="17" viewBox="0 0 17 17"><circle cx="9" cy="5" r="4.2" fill="#e0e0e0" stroke="#000" stroke-width="1.4"/><circle cx="8" cy="4" r="1.5" fill="#fff"/><path d="M6 8 L1.5 12.5" stroke="#000" stroke-width="2.6" stroke-linecap="round"/><path d="M9.5 16.5 L12.5 10 L15.5 16.5 M10.8 14.3 h3.4 M8.5 16.5h2.5M14 16.5h2.5" stroke="#000" stroke-width="1.3" fill="none"/></svg>
<svg class="a" style="left:956px;top:712px;" width="16" height="16" viewBox="0 0 16 16"><g shape-rendering="crispEdges"><rect x="0" y="11" width="8" height="5" fill="#c0103a"/><rect x="8" y="11" width="8" height="5" fill="#0a14e6"/><rect x="1" y="0" width="6" height="2" fill="#000"/><rect x="0" y="1" width="1" height="3" fill="#000"/><rect x="7" y="1" width="2" height="11" fill="#000"/><rect x="1" y="2" width="6" height="7" fill="#f8e0a8"/><rect x="2" y="9" width="4" height="3" fill="#f8e0a8"/><rect x="0" y="9" width="2" height="3" fill="#000"/><rect x="10" y="0" width="6" height="2" fill="#000"/><rect x="9" y="1" width="1" height="10" fill="#000"/><rect x="10" y="2" width="6" height="7" fill="#f8e8b0"/><rect x="11" y="9" width="4" height="3" fill="#f8e8b0"/><rect x="15" y="9" width="1" height="3" fill="#000"/><rect x="2" y="3" width="1" height="1" fill="#000"/><rect x="5" y="3" width="1" height="1" fill="#000"/><rect x="3" y="5" width="1" height="1" fill="#000"/><rect x="2" y="7" width="4" height="1" fill="#c03010"/><rect x="11" y="3" width="1" height="1" fill="#000"/><rect x="13" y="3" width="1" height="1" fill="#000"/><rect x="12" y="5" width="1" height="1" fill="#000"/><rect x="11" y="7" width="4" height="1" fill="#000"/><rect x="7" y="12" width="3" height="2" fill="#fff"/><rect x="8" y="14" width="1" height="1" fill="#fff"/></g></svg>
<svg class="a" style="left:976px;top:711px;" width="13" height="17" viewBox="0 0 13 17"><g shape-rendering="crispEdges"><rect x="0" y="0" width="9" height="10" fill="#000"/><rect x="1" y="1" width="7" height="8" fill="#fff"/><rect x="2" y="2" width="5" height="1" fill="#000"/><rect x="2" y="5" width="1" height="1" fill="#000"/><rect x="4" y="5" width="3" height="1" fill="#000"/><rect x="2" y="7" width="3" height="1" fill="#000"/></g><path d="M6.5 8.5 V15 L8.2 13.4 L9.6 16.5 L11 15.8 L9.8 12.8 H12 Z" fill="#fff" stroke="#000" stroke-width="1"/></svg>
<svg class="a" style="left:1002px;top:717px;" width="11" height="11" viewBox="0 0 11 11"><path d="M10 2 L2 10 M10 5 L5 10 M10 8 L8 10" stroke="#a0a0a0" stroke-width="1"/><path d="M10.5 3 L3 10.5 M10.5 6 L6 10.5 M10.5 9 L9 10.5" stroke="#fff" stroke-width="1"/></svg>
<div class="a" style="left:7px;top:729px;width:1007px;height:1px;background:#fafafa;"></div>
<svg class="a" style="left:13px;top:55px;" width="17" height="11" viewBox="0 0 17 11"><path d="M1 5.5 Q8.5 -2 16 5.5 Q8.5 13 1 5.5Z" fill="#1a2a50" stroke="#000" stroke-width="1.6" stroke-dasharray="1.2 0.8"/><ellipse cx="8.5" cy="5.5" rx="3.2" ry="3" fill="#3a6ab0"/><circle cx="8.5" cy="5.5" r="1.3" fill="#000"/><path d="M4 1 L5 2.5 M8.5 0 V1.5 M13 1 L12 2.5 M4 10 L5 8.5 M13 10 L12 8.5" stroke="#000" stroke-width="1"/></svg>
<svg class="a" style="left:70px;top:53px;" width="16" height="14" viewBox="0 0 16 14"><g shape-rendering="crispEdges"><rect x="5" y="0" width="1" height="1" fill="#000"/><rect x="6" y="0" width="1" height="1" fill="#000"/><rect x="9" y="0" width="1" height="1" fill="#000"/><rect x="10" y="0" width="1" height="1" fill="#000"/><rect x="13" y="0" width="1" height="1" fill="#000"/><rect x="14" y="0" width="1" height="1" fill="#000"/><rect x="1" y="2" width="15" height="1" fill="#000"/><rect x="1" y="6" width="15" height="1" fill="#000"/><rect x="1" y="10" width="15" height="1" fill="#000"/><rect x="2" y="2" width="1" height="12" fill="#000"/><rect x="0" y="4" width="1" height="1" fill="#000"/><rect x="5" y="4" width="1" height="1" fill="#000"/><rect x="6" y="4" width="1" height="1" fill="#000"/><rect x="8" y="4" width="1" height="1" fill="#000"/><rect x="9" y="4" width="1" height="1" fill="#000"/><rect x="10" y="4" width="1" height="1" fill="#000"/><rect x="12" y="4" width="1" height="1" fill="#000"/><rect x="13" y="4" width="1" height="1" fill="#000"/><rect x="14" y="4" width="1" height="1" fill="#000"/><rect x="0" y="8" width="1" height="1" fill="#000"/><rect x="5" y="8" width="1" height="1" fill="#000"/><rect x="6" y="8" width="1" height="1" fill="#000"/><rect x="8" y="8" width="1" height="1" fill="#000"/><rect x="9" y="8" width="1" height="1" fill="#000"/><rect x="10" y="8" width="1" height="1" fill="#000"/><rect x="12" y="8" width="1" height="1" fill="#000"/><rect x="13" y="8" width="1" height="1" fill="#000"/><rect x="14" y="8" width="1" height="1" fill="#000"/><rect x="0" y="12" width="1" height="1" fill="#000"/><rect x="5" y="12" width="1" height="1" fill="#000"/><rect x="6" y="12" width="1" height="1" fill="#000"/><rect x="8" y="12" width="1" height="1" fill="#000"/><rect x="9" y="12" width="1" height="1" fill="#000"/><rect x="10" y="12" width="1" height="1" fill="#000"/><rect x="12" y="12" width="1" height="1" fill="#000"/><rect x="13" y="12" width="1" height="1" fill="#000"/><rect x="14" y="12" width="1" height="1" fill="#000"/></g></svg>
<svg class="a" style="left:147px;top:53px;" width="15" height="14" viewBox="0 0 15 14"><path d="M4.5 0.5 H8.5 L13.5 4.5 L14.5 6.5 V9.5 L9.5 13.5 H6.5 L0.5 9.5 V7.5 L2.5 4 Z" fill="#2a30b0" stroke="#000030" stroke-width="1"/><path d="M3 5 Q6 1.5 10 3.5" stroke="#7a90f0" stroke-width="1.5" fill="none"/><path d="M2 9 L7 5.5 L9.5 7" stroke="#7a30c0" stroke-width="2.2" fill="none"/><path d="M4 12 L12 6.5" stroke="#b0b8ff" stroke-width="1" stroke-dasharray="1 1"/><path d="M9 12.5 L14 8.5" stroke="#0a0a60" stroke-width="2"/></svg>
<svg class="a" style="left:247px;top:53px;" width="14" height="14" viewBox="0 0 14 14"><g shape-rendering="crispEdges"><rect x="0" y="3" width="11" height="10" fill="#000"/><rect x="1" y="4" width="9" height="8" fill="#fff"/><rect x="2" y="0" width="11" height="11" fill="#000"/><rect x="3" y="1" width="9" height="9" fill="#fff"/><rect x="5" y="2" width="1" height="7" fill="#000"/><rect x="6" y="5" width="1" height="1" fill="#000"/><rect x="7" y="4" width="1" height="1" fill="#000"/><rect x="8" y="3" width="1" height="1" fill="#000"/><rect x="9" y="2" width="1" height="1" fill="#000"/><rect x="7" y="6" width="1" height="1" fill="#000"/><rect x="8" y="7" width="1" height="1" fill="#000"/><rect x="9" y="8" width="1" height="1" fill="#000"/></g></svg>
<svg class="a" style="left:319px;top:53px;" width="14" height="14" viewBox="0 0 14 14"><g shape-rendering="crispEdges"><rect x="0" y="3" width="11" height="10" fill="#000"/><rect x="1" y="4" width="9" height="8" fill="#fff"/><rect x="2" y="0" width="11" height="11" fill="#000"/><rect x="3" y="1" width="9" height="9" fill="#fff"/><rect x="5" y="2" width="1" height="7" fill="#000"/><rect x="5" y="8" width="5" height="1" fill="#000"/></g></svg>
<svg class="a" style="left:417px;top:53px;" width="14" height="13" viewBox="0 0 14 13"><path d="M6 7 L1.8 11.2" stroke="#000" stroke-width="3.8" stroke-linecap="square"/><path d="M6 7 L1.8 11.2" stroke="#909090" stroke-width="1.6"/><path d="M7 0.5 H10.5 V1.8 H12.5 L13.2 3 V6 L10.5 8.7 H7.2 L5 6.5 V3Z" fill="#949494" stroke="#000" stroke-width="1"/><circle cx="9.2" cy="4.5" r="1.8" fill="#fff" stroke="#000" stroke-width="1"/></svg>
<svg class="a" style="left:509px;top:53px;" width="11" height="15" viewBox="0 0 11 15"><g shape-rendering="crispEdges"><rect x="0" y="0" width="10" height="14" fill="#fff"/><rect x="10" y="1" width="1" height="14" fill="#606060"/><rect x="1" y="14" width="10" height="1" fill="#606060"/><rect x="1" y="1" width="2" height="1" fill="#000"/><rect x="6" y="1" width="2" height="1" fill="#000"/><rect x="0" y="4" width="3" height="1" fill="#000"/><rect x="0" y="7" width="2" height="1" fill="#000"/><rect x="3" y="7" width="2" height="1" fill="#000"/><rect x="6" y="7" width="3" height="1" fill="#000"/><rect x="0" y="9" width="2" height="1" fill="#000"/><rect x="3" y="9" width="1" height="1" fill="#000"/><rect x="5" y="9" width="2" height="1" fill="#000"/><rect x="8" y="9" width="1" height="1" fill="#000"/><rect x="1" y="12" width="3" height="1" fill="#1020a0"/></g></svg>
<svg class="a" style="left:616px;top:52px;" width="16" height="16" viewBox="0 0 16 16"><g shape-rendering="crispEdges"><rect x="0" y="11" width="8" height="5" fill="#c0103a"/><rect x="8" y="11" width="8" height="5" fill="#0a14e6"/><rect x="1" y="0" width="6" height="2" fill="#000"/><rect x="0" y="1" width="1" height="3" fill="#000"/><rect x="7" y="1" width="2" height="11" fill="#000"/><rect x="1" y="2" width="6" height="7" fill="#f8e0a8"/><rect x="2" y="9" width="4" height="3" fill="#f8e0a8"/><rect x="0" y="9" width="2" height="3" fill="#000"/><rect x="10" y="0" width="6" height="2" fill="#000"/><rect x="9" y="1" width="1" height="10" fill="#000"/><rect x="10" y="2" width="6" height="7" fill="#f8e8b0"/><rect x="11" y="9" width="4" height="3" fill="#f8e8b0"/><rect x="15" y="9" width="1" height="3" fill="#000"/><rect x="2" y="3" width="1" height="1" fill="#000"/><rect x="5" y="3" width="1" height="1" fill="#000"/><rect x="3" y="5" width="1" height="1" fill="#000"/><rect x="2" y="7" width="4" height="1" fill="#c03010"/><rect x="11" y="3" width="1" height="1" fill="#000"/><rect x="13" y="3" width="1" height="1" fill="#000"/><rect x="12" y="5" width="1" height="1" fill="#000"/><rect x="11" y="7" width="4" height="1" fill="#000"/><rect x="7" y="12" width="3" height="2" fill="#fff"/><rect x="8" y="14" width="1" height="1" fill="#fff"/></g></svg>
<svg class="a" style="left:700px;top:52px;" width="16" height="16" viewBox="0 0 16 16"><g shape-rendering="crispEdges"><rect x="0" y="11" width="8" height="5" fill="#c0103a"/><rect x="8" y="11" width="8" height="5" fill="#0a14e6"/><rect x="1" y="0" width="6" height="2" fill="#000"/><rect x="0" y="1" width="1" height="3" fill="#000"/><rect x="7" y="1" width="2" height="11" fill="#000"/><rect x="1" y="2" width="6" height="7" fill="#f8e0a8"/><rect x="2" y="9" width="4" height="3" fill="#f8e0a8"/><rect x="0" y="9" width="2" height="3" fill="#000"/><rect x="10" y="0" width="6" height="2" fill="#000"/><rect x="9" y="1" width="1" height="10" fill="#000"/><rect x="10" y="2" width="6" height="7" fill="#f8e8b0"/><rect x="11" y="9" width="4" height="3" fill="#f8e8b0"/><rect x="15" y="9" width="1" height="3" fill="#000"/><rect x="2" y="3" width="1" height="1" fill="#000"/><rect x="5" y="3" width="1" height="1" fill="#000"/><rect x="3" y="5" width="1" height="1" fill="#000"/><rect x="2" y="7" width="4" height="1" fill="#c03010"/><rect x="11" y="3" width="1" height="1" fill="#000"/><rect x="13" y="3" width="1" height="1" fill="#000"/><rect x="12" y="5" width="1" height="1" fill="#000"/><rect x="11" y="7" width="4" height="1" fill="#000"/><rect x="7" y="12" width="3" height="2" fill="#fff"/><rect x="8" y="14" width="1" height="1" fill="#fff"/></g></svg>
<svg class="a" style="left:776px;top:52px;" width="16" height="16" viewBox="0 0 16 16"><g shape-rendering="crispEdges"><rect x="0" y="11" width="8" height="5" fill="#c0103a"/><rect x="8" y="11" width="8" height="5" fill="#0a14e6"/><rect x="1" y="0" width="6" height="2" fill="#000"/><rect x="0" y="1" width="1" height="3" fill="#000"/><rect x="7" y="1" width="2" height="11" fill="#000"/><rect x="1" y="2" width="6" height="7" fill="#f8e0a8"/><rect x="2" y="9" width="4" height="3" fill="#f8e0a8"/><rect x="0" y="9" width="2" height="3" fill="#000"/><rect x="10" y="0" width="6" height="2" fill="#000"/><rect x="9" y="1" width="1" height="10" fill="#000"/><rect x="10" y="2" width="6" height="7" fill="#f8e8b0"/><rect x="11" y="9" width="4" height="3" fill="#f8e8b0"/><rect x="15" y="9" width="1" height="3" fill="#000"/><rect x="2" y="3" width="1" height="1" fill="#000"/><rect x="5" y="3" width="1" height="1" fill="#000"/><rect x="3" y="5" width="1" height="1" fill="#000"/><rect x="2" y="7" width="4" height="1" fill="#c03010"/><rect x="11" y="3" width="1" height="1" fill="#000"/><rect x="13" y="3" width="1" height="1" fill="#000"/><rect x="12" y="5" width="1" height="1" fill="#000"/><rect x="11" y="7" width="4" height="1" fill="#000"/><rect x="7" y="12" width="3" height="2" fill="#fff"/><rect x="8" y="14" width="1" height="1" fill="#fff"/></g></svg>
<svg class="a" style="left:906px;top:53px;" width="12" height="13" viewBox="0 0 12 13"><path d="M10.5 2 H5 L2 5 V8 L5 11 H10.5" stroke="#000" stroke-width="3.6" fill="none" stroke-linecap="square"/><path d="M1 5.2 H8 M1 7.8 H8" stroke="#000" stroke-width="2.4"/><path d="M10.5 2 H5 L2 5 V8 L5 11 H10.5" stroke="#f0f030" stroke-width="1.3" fill="none"/><path d="M1.2 5.2 H7.5 M1.2 7.8 H7.5" stroke="#f0f030" stroke-width="0.9"/></svg>
<svg class="a" style="left:16px;top:731px;" width="26" height="7" viewBox="0 0 26 7"><path d="M0.5 7 Q13 -2 25.5 7" fill="#c8d8e8" stroke="#8aa8c8" stroke-width="1"/></svg>
</body></html>
